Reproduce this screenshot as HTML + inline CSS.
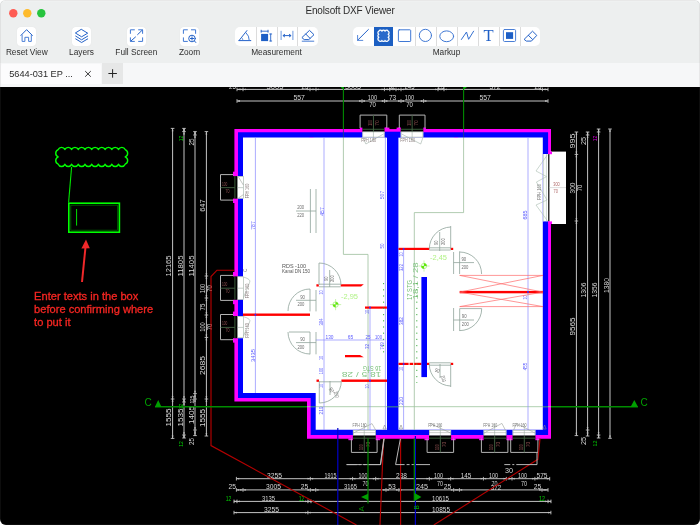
<!DOCTYPE html>
<html>
<head>
<meta charset="utf-8">
<title>Enolsoft DXF Viewer</title>
<style>
html,body{margin:0;padding:0;}
body{width:700px;height:525px;overflow:hidden;background:#fff;font-family:"Liberation Sans",Arial,sans-serif;}
#win{position:absolute;left:0;top:0;width:700px;height:525px;border-radius:5.5px 5.5px 6px 6px;overflow:hidden;background:#eceeee;}
#bar{position:absolute;left:0;top:0;width:700px;height:63px;background:#edefef;box-shadow:inset 0 1.2px 0 #f6f6f6;}
#title{position:absolute;left:0;top:4px;width:700px;text-align:center;font-size:10px;letter-spacing:-0.15px;color:#2c2c2c;line-height:14px;}
.tl{position:absolute;top:9.1px;width:8.4px;height:8.4px;border-radius:50%;}
.btn{position:absolute;top:26.8px;width:19.3px;height:19.3px;background:#fff;border-radius:3.5px;box-shadow:0 0 0.8px rgba(0,0,0,0.12);}
.lbl{position:absolute;top:46.9px;font-size:8.3px;color:#2e2e2e;line-height:10px;white-space:nowrap;text-align:center;transform:translateX(-50%);}
.grp{position:absolute;top:26.8px;height:19.3px;background:#fff;border-radius:5px;overflow:hidden;}
.cell{position:absolute;top:0;height:19.3px;border-left:0.6px solid #dcdcdc;box-sizing:border-box;}
#tabs{position:absolute;left:0;top:62.8px;width:700px;height:23.8px;background:#f6f7f8;z-index:2;}
#tab{position:absolute;left:1px;top:1px;width:100px;height:20px;background:#fcfcfd;border-radius:1.5px;}
#tabtxt{position:absolute;left:8.2px;top:4.8px;font-size:9.2px;line-height:11px;color:#2a2a2a;white-space:nowrap;}
#plus{position:absolute;left:102.1px;top:0.3px;width:20.7px;height:20.4px;background:#e6e7e7;}
#cv{position:absolute;left:0;top:86px;width:700px;height:439px;background:#000;}
svg{display:block;}
#bar,#tabs,#cv{will-change:transform;}
svg.ic{position:absolute;left:0;top:0;}
</style>
</head>
<body>
<div id="win">
<div id="bar">
  <div id="title">Enolsoft DXF Viewer</div>

  <div class="btn" style="left:17px;"></div>
  <div class="lbl" style="left:26.8px;">Reset View</div>
  <div class="btn" style="left:72px;"></div>
  <div class="lbl" style="left:81.5px;">Layers</div>
  <div class="btn" style="left:127px;"></div>
  <div class="lbl" style="left:136.3px;">Full Screen</div>
  <div class="btn" style="left:180px;"></div>
  <div class="lbl" style="left:189.5px;">Zoom</div>

  <div class="grp" style="left:235px;width:83px;">
    <div class="cell" style="left:20.75px;width:20.75px;"></div>
    <div class="cell" style="left:41.5px;width:20.75px;"></div>
    <div class="cell" style="left:62.25px;width:20.75px;"></div>
  </div>
  <div class="lbl" style="left:276.5px;">Measurement</div>

  <div class="grp" style="left:353px;width:187.3px;">
    <div class="cell" style="left:20.8px;width:19.5px;background:#1c5fc2;border-left:none;"></div>
    <div class="cell" style="left:41.6px;width:20.8px;border-left:none;"></div>
    <div class="cell" style="left:62.4px;width:20.8px;"></div>
    <div class="cell" style="left:83.2px;width:20.8px;"></div>
    <div class="cell" style="left:104px;width:20.8px;"></div>
    <div class="cell" style="left:124.9px;width:20.8px;"></div>
    <div class="cell" style="left:145.7px;width:20.8px;"></div>
    <div class="cell" style="left:166.5px;width:20.8px;"></div>
  </div>
  <div class="lbl" style="left:446.5px;">Markup</div>
  <svg class="ic" width="700" height="63" viewBox="0 0 700 63" fill="none" stroke="#2462c8" stroke-width="1" stroke-linecap="round" stroke-linejoin="round">
  <circle cx="13.3" cy="13.2" r="4.2" fill="#fe5c54" stroke="none"/><circle cx="27.3" cy="13.2" r="4.2" fill="#febb2c" stroke="none"/><circle cx="41.3" cy="13.2" r="4.2" fill="#27c43e" stroke="none"/>
  <!-- home -->
  <path d="M20.9 35.4 L26.6 29.7 L32.4 35.4"/>
  <path d="M22.1 35 V41.4 H24.9 V37.3 H28.6 V41.4 H31.3 V35" stroke="#4a7fd6"/>
  <!-- layers -->
  <path d="M81.6 29.5 L87.7 33.2 L81.6 36.8 L75.7 33.2 Z"/>
  <path d="M75.7 36.1 L81.6 39.8 L87.7 36.1"/>
  <path d="M75.7 38.9 L81.6 42.5 L87.7 38.9"/>
  <!-- full screen -->
  <path d="M130.4 33.4 V29.8 H134.4 M138.6 29.8 H142.6 V33.4 M130.4 37.8 V41.4 H134.4 M138.6 41.4 H142.6 V37.8" stroke="#3f78d4"/>
  <path d="M137.6 34.6 L142.2 30.2 M135.5 37 L130.9 41"/>
  <!-- zoom -->
  <path d="M183.4 33.4 V29.8 H187.4 M191.4 29.8 H195.6 V33.4 M183.4 37.8 V41.4 H187.4" stroke="#3f78d4"/>
  <circle cx="192" cy="38.5" r="3.3"/>
  <path d="M190.3 38.5 H193.7 M192 36.8 V40.2 M194.5 41 L195.8 42.5"/>
  <!-- angle -->
  <path d="M239 40.6 H250.8 M239 40.6 L246.9 30.6"/>
  <path d="M245.9 32.6 A10.5 10.5 0 0 1 249.3 40.4" stroke="#3f78d4"/>
  <path d="M241.6 37.4 A4.2 4.2 0 0 1 243 40.4" stroke="#3f78d4" stroke-width="0.8"/>
  <!-- area -->
  <rect x="261.1" y="33.9" width="7" height="7.2" fill="#1d5fc6" stroke="none"/>
  <path d="M261.2 31.2 H268 M261.2 30.2 V32.3 M268 30.2 V32.3 M270.7 34 V41 M269.7 34 H271.7 M269.7 41 H271.7" stroke-width="0.9"/>
  <!-- distance -->
  <path d="M281.1 31.2 V39.6 M292.9 31.2 V39.6" stroke="#6b97de"/>
  <path d="M283.2 35.6 H290.8"/>
  <path d="M284.6 34.4 L283 35.6 L284.6 36.8 M289.4 34.4 L291 35.6 L289.4 36.8"/>
  <!-- eraser (measurement) -->
  <path d="M302.2 37.3 L309.5 30.4 L314 34.7 L308.8 39.6 H304.6 Z M305.7 34 L310 38.3"/>
  <path d="M302.2 41.2 H313.8" stroke="#4a7fd6"/>
  <!-- arrow -->
  <path d="M368.4 29.5 L357.6 40.3"/>
  <path d="M357.6 35.4 V40.4 H362.8" stroke="#5a8bda"/>
  <!-- cloud (selected) -->
  <path d="M378.8 31.2 a1.75 1.75 0 0 1 3.13 0 a1.75 1.75 0 0 1 3.13 0 a1.75 1.75 0 0 1 3.13 0 a1.75 1.75 0 0 1 0 3.07 a1.75 1.75 0 0 1 0 3.07 a1.75 1.75 0 0 1 0 3.07 a1.75 1.75 0 0 1 -3.13 0 a1.75 1.75 0 0 1 -3.13 0 a1.75 1.75 0 0 1 -3.13 0 a1.75 1.75 0 0 1 0 -3.07 a1.75 1.75 0 0 1 0 -3.07 a1.75 1.75 0 0 1 0 -3.07 Z" stroke="#fff" stroke-width="1.25" fill="#2a6acb"/>
  <!-- rect -->
  <rect x="398.4" y="29.8" width="12.3" height="11.7" rx="0.8" stroke="#3f78d4"/>
  <!-- circle -->
  <circle cx="425.4" cy="35.4" r="6.1" stroke="#3f78d4"/>
  <!-- ellipse -->
  <ellipse cx="446.7" cy="36.3" rx="6.9" ry="5.4" stroke="#3f78d4"/>
  <!-- polyline -->
  <path d="M461.4 39.5 L466.5 32 L468.6 39.3 L473.6 31.2" stroke="#3570d0"/>
  <!-- filled square -->
  <rect x="503.4" y="29.5" width="12.2" height="12" rx="1.2" stroke="#4a7fd6"/>
  <rect x="506" y="32.2" width="7.1" height="6.7" fill="#1d5fc6" stroke="none"/>
  <!-- eraser (markup) -->
  <path d="M524.4 39.1 L532.5 31.2 L536.8 35.4 L531.4 41.1 H526.8 Z M528.4 35.3 L532.5 39.4"/>
  <!-- T -->
  <text x="488.5" y="40.9" font-family="Liberation Serif, Times New Roman, serif" font-size="16.5" fill="#1f5fc6" stroke="none" text-anchor="middle">T</text>
</svg>

</div>
<div id="tabs">
  <div id="tab"><div id="tabtxt">5644-031 EP ...</div></div>
  <div id="plus"></div>
  <svg class="ic" width="140" height="23" viewBox="0 62.8 140 23" fill="none" stroke="#222" stroke-width="0.9">
  <path d="M85.2 70.9 L90.8 76.5 M90.8 70.9 L85.2 76.5"/>
  <path d="M108.4 73.3 H116.9 M112.6 69 V77.5" stroke-width="1"/>
</svg>

</div>
<div id="cv">
<svg width="700" height="439" viewBox="0 86 700 439" font-family="Liberation Sans, Arial, sans-serif">
<path d="M234.4 128.9 L551 128.9 L551 438.7 L307 438.7 L307 401.4 L234.4 401.4 Z" fill="#ff00ff" stroke="none" stroke-width="1" />
<path d="M238 132.2 L548.1 132.2 L548.1 435.1 L310.7 435.1 L310.7 398 L238 398 Z" fill="#0000ff" stroke="none" stroke-width="1" />
<path d="M243 137.4 L542.8 137.4 L542.8 429.8 L315.7 429.8 L315.7 393 L243 393 Z" fill="#fff" stroke="none" stroke-width="1" />
<rect x="309.5" y="137" width="4" height="0.9" fill="#b050ff" />
<rect x="454" y="137" width="4" height="0.9" fill="#b050ff" />
<rect x="387" y="132.6" width="11.4" height="300" fill="#0000ff" />
<rect x="232.8" y="176.1" width="5.4" height="22.5" fill="#000" />
<rect x="237.6" y="176.1" width="5.6" height="22.5" fill="#fff" />
<rect x="233" y="171.7" width="2" height="4.4" fill="#ff00ff" />
<rect x="233" y="198.6" width="2" height="4.4" fill="#ff00ff" />
<line x1="234.9" y1="176.1" x2="234.9" y2="198.6" stroke="#355535" stroke-width="1.1" />
<rect x="237.6" y="176.5" width="5.7" height="21.7" fill="none" stroke="#9fb0a6" stroke-width="0.6"/>
<path d="M238.5 177.1 L243.4 185.1" fill="none" stroke="#9aa09a" stroke-width="0.6" />
<path d="M243.4 194.6 L238.5 198.0" fill="none" stroke="#9aa09a" stroke-width="0.6" />
<rect x="232.8" y="276.4" width="5.4" height="23.400000000000034" fill="#000" />
<rect x="237.6" y="276.4" width="5.6" height="23.400000000000034" fill="#fff" />
<rect x="233" y="272.0" width="2" height="4.4" fill="#ff00ff" />
<rect x="233" y="299.8" width="2" height="4.4" fill="#ff00ff" />
<line x1="234.9" y1="276.4" x2="234.9" y2="299.8" stroke="#355535" stroke-width="1.1" />
<rect x="237.6" y="276.79999999999995" width="5.7" height="22.600000000000033" fill="none" stroke="#9fb0a6" stroke-width="0.6"/>
<path d="M243.4 277.0 Q251.5 279.4 249.6 282.4 L243.4 297.8" fill="none" stroke="#9fb0a6" stroke-width="0.6"/>
<rect x="232.8" y="316" width="5.4" height="22.19999999999999" fill="#000" />
<rect x="237.6" y="316" width="5.6" height="22.19999999999999" fill="#fff" />
<rect x="233" y="311.6" width="2" height="4.4" fill="#ff00ff" />
<rect x="233" y="338.2" width="2" height="4.4" fill="#ff00ff" />
<line x1="234.9" y1="316" x2="234.9" y2="338.2" stroke="#355535" stroke-width="1.1" />
<rect x="237.6" y="316.4" width="5.7" height="21.399999999999988" fill="none" stroke="#9fb0a6" stroke-width="0.6"/>
<path d="M243.4 316.6 Q251.5 319 249.6 322 L243.4 336.2" fill="none" stroke="#9fb0a6" stroke-width="0.6"/>
<rect x="384.5" y="127.6" width="16.2" height="5" fill="#ff00ff" />
<rect x="389.4" y="127" width="7.2" height="2.1" fill="#000" />
<rect x="385" y="131.7" width="15.7" height="5.6" fill="#0000ff" />
<rect x="362.4" y="126.8" width="22.100000000000023" height="5.2" fill="#000" />
<rect x="362.4" y="131.7" width="22.100000000000023" height="5.9" fill="#fff" />
<rect x="359.79999999999995" y="127.6" width="2.6" height="2" fill="#ff00ff" />
<rect x="384.5" y="127.6" width="2.6" height="2" fill="#ff00ff" />
<line x1="362.4" y1="129.3" x2="384.5" y2="129.3" stroke="#355535" stroke-width="1.1" />
<rect x="362.79999999999995" y="131.9" width="21.300000000000022" height="5.2" fill="none" stroke="#9fb0a6" stroke-width="0.6"/>
<path d="M383.5 134 L365.9 144 L363.0 137.6" fill="none" stroke="#9fb0a6" stroke-width="0.6" />
<rect x="400.7" y="126.8" width="22.600000000000023" height="5.2" fill="#000" />
<rect x="400.7" y="131.7" width="22.600000000000023" height="5.9" fill="#fff" />
<rect x="398.09999999999997" y="127.6" width="2.6" height="2" fill="#ff00ff" />
<rect x="423.3" y="127.6" width="2.6" height="2" fill="#ff00ff" />
<line x1="400.7" y1="129.3" x2="423.3" y2="129.3" stroke="#355535" stroke-width="1.1" />
<rect x="401.09999999999997" y="131.9" width="21.800000000000022" height="5.2" fill="none" stroke="#9fb0a6" stroke-width="0.6"/>
<path d="M401.7 134 L420.7 144 L422.90000000000003 137.6" fill="none" stroke="#9fb0a6" stroke-width="0.6" />
<rect x="543" y="154" width="9" height="67.4" fill="#fff" />
<rect x="550" y="151.6" width="16" height="72.4" fill="#fff" />
<rect x="548.2" y="154" width="1.2" height="67.4" fill="#000" />
<rect x="548" y="151.6" width="4" height="2.6" fill="#ff00ff" />
<rect x="548" y="221.4" width="4" height="2.6" fill="#ff00ff" />
<rect x="352.9" y="430" width="22.80000000000001" height="5.4" fill="#fff" />
<rect x="352.9" y="435.2" width="22.80000000000001" height="5" fill="#000" />
<rect x="348.4" y="438.4" width="4.5" height="1.8" fill="#ff00ff" />
<rect x="375.7" y="438.4" width="4.5" height="1.8" fill="#ff00ff" />
<rect x="353.29999999999995" y="430.4" width="22.00000000000001" height="4.9" fill="none" stroke="#9fb0a6" stroke-width="0.6"/>
<line x1="352.9" y1="438.2" x2="375.7" y2="438.2" stroke="#355535" stroke-width="1.1" />
<rect x="429" y="430" width="22.100000000000023" height="5.4" fill="#fff" />
<rect x="429" y="435.2" width="22.100000000000023" height="5" fill="#000" />
<rect x="424.5" y="438.4" width="4.5" height="1.8" fill="#ff00ff" />
<rect x="451.1" y="438.4" width="4.5" height="1.8" fill="#ff00ff" />
<rect x="429.4" y="430.4" width="21.300000000000022" height="4.9" fill="none" stroke="#9fb0a6" stroke-width="0.6"/>
<line x1="429" y1="438.2" x2="451.1" y2="438.2" stroke="#355535" stroke-width="1.1" />
<rect x="483.6" y="430" width="22.799999999999955" height="5.4" fill="#fff" />
<rect x="483.6" y="435.2" width="22.799999999999955" height="5" fill="#000" />
<rect x="479.1" y="438.4" width="4.5" height="1.8" fill="#ff00ff" />
<rect x="506.4" y="438.4" width="4.5" height="1.8" fill="#ff00ff" />
<rect x="484.0" y="430.4" width="21.999999999999954" height="4.9" fill="none" stroke="#9fb0a6" stroke-width="0.6"/>
<line x1="483.6" y1="438.2" x2="506.4" y2="438.2" stroke="#355535" stroke-width="1.1" />
<rect x="512.6" y="430" width="22.799999999999955" height="5.4" fill="#fff" />
<rect x="512.6" y="435.2" width="22.799999999999955" height="5" fill="#000" />
<rect x="508.1" y="438.4" width="4.5" height="1.8" fill="#ff00ff" />
<rect x="535.4" y="438.4" width="4.5" height="1.8" fill="#ff00ff" />
<rect x="513.0" y="430.4" width="21.999999999999954" height="4.9" fill="none" stroke="#9fb0a6" stroke-width="0.6"/>
<line x1="512.6" y1="438.2" x2="535.4" y2="438.2" stroke="#355535" stroke-width="1.1" />
<path d="M233.4 174.6 L220.5 174.6 L220.5 200.1 L233.4 200.1" fill="none" stroke="#b4b4b4" stroke-width="1" />
<line x1="220.5" y1="187.65" x2="234.8" y2="187.65" stroke="#466646" stroke-width="0.9" />
<line x1="237.6" y1="187.65" x2="243.2" y2="187.65" stroke="#9fb0a6" stroke-width="0.6" />
<text x="222" y="185.55" font-size="5" fill="#8e5050" text-anchor="start" textLength="5.4" lengthAdjust="spacingAndGlyphs" >100</text>
<text x="225.4" y="192.55" font-size="5" fill="#8e5050" text-anchor="start" textLength="4" lengthAdjust="spacingAndGlyphs" >70</text>
<path d="M233.4 275.4 L220.5 275.4 L220.5 300.4 L233.4 300.4" fill="none" stroke="#b4b4b4" stroke-width="1" />
<line x1="220.5" y1="288.2" x2="234.8" y2="288.2" stroke="#466646" stroke-width="0.9" />
<line x1="237.6" y1="288.2" x2="243.2" y2="288.2" stroke="#9fb0a6" stroke-width="0.6" />
<text x="222" y="286.09999999999997" font-size="5" fill="#8e5050" text-anchor="start" textLength="5.4" lengthAdjust="spacingAndGlyphs" >100</text>
<text x="225.4" y="293.09999999999997" font-size="5" fill="#8e5050" text-anchor="start" textLength="4" lengthAdjust="spacingAndGlyphs" >70</text>
<path d="M233.4 314.5 L220.5 314.5 L220.5 339.7 L233.4 339.7" fill="none" stroke="#b4b4b4" stroke-width="1" />
<line x1="220.5" y1="327.40000000000003" x2="234.8" y2="327.40000000000003" stroke="#466646" stroke-width="0.9" />
<line x1="237.6" y1="327.40000000000003" x2="243.2" y2="327.40000000000003" stroke="#9fb0a6" stroke-width="0.6" />
<text x="222" y="325.3" font-size="5" fill="#8e5050" text-anchor="start" textLength="5.4" lengthAdjust="spacingAndGlyphs" >100</text>
<text x="225.4" y="332.3" font-size="5" fill="#8e5050" text-anchor="start" textLength="4" lengthAdjust="spacingAndGlyphs" >70</text>
<path d="M360.1 128 L360.1 115.1 L386.8 115.1 L386.8 128" fill="none" stroke="#b4b4b4" stroke-width="1" />
<line x1="373.45000000000005" y1="115.1" x2="373.45000000000005" y2="131.6" stroke="#466646" stroke-width="0.9" />
<line x1="373.45000000000005" y1="131.6" x2="373.45000000000005" y2="140" stroke="#9fb0a6" stroke-width="0.6" />
<text x="371.95000000000005" y="125.8" font-size="5" fill="#8e5050" text-anchor="start" textLength="5.6" lengthAdjust="spacingAndGlyphs" transform="rotate(-90 371.95000000000005 125.8)" >100</text>
<text x="379.45000000000005" y="125.8" font-size="5" fill="#8e5050" text-anchor="start" textLength="5.6" lengthAdjust="spacingAndGlyphs" transform="rotate(-90 379.45000000000005 125.8)" >70</text>
<path d="M399.3 128 L399.3 115.1 L425 115.1 L425 128" fill="none" stroke="#b4b4b4" stroke-width="1" />
<line x1="412.15" y1="115.1" x2="412.15" y2="131.6" stroke="#466646" stroke-width="0.9" />
<line x1="412.15" y1="131.6" x2="412.15" y2="140" stroke="#9fb0a6" stroke-width="0.6" />
<text x="410.65" y="125.8" font-size="5" fill="#8e5050" text-anchor="start" textLength="5.6" lengthAdjust="spacingAndGlyphs" transform="rotate(-90 410.65 125.8)" >100</text>
<text x="418.15" y="125.8" font-size="5" fill="#8e5050" text-anchor="start" textLength="5.6" lengthAdjust="spacingAndGlyphs" transform="rotate(-90 418.15 125.8)" >70</text>
<path d="M351.4 438.6 L351.4 452.4 L377.1 452.4 L377.1 438.6" fill="none" stroke="#b4b4b4" stroke-width="1" />
<line x1="364.25" y1="435.4" x2="364.25" y2="452.4" stroke="#466646" stroke-width="0.9" />
<line x1="364.25" y1="424" x2="364.25" y2="435.4" stroke="#9fb0a6" stroke-width="0.6" />
<text x="362.65" y="450" font-size="5" fill="#8e5050" text-anchor="start" textLength="5.6" lengthAdjust="spacingAndGlyphs" transform="rotate(-90 362.65 450)" >100</text>
<text x="369.85" y="447" font-size="5" fill="#8e5050" text-anchor="start" textLength="5.2" lengthAdjust="spacingAndGlyphs" transform="rotate(-90 369.85 447)" >70</text>
<path d="M427.1 438.6 L427.1 452.4 L453.6 452.4 L453.6 438.6" fill="none" stroke="#b4b4b4" stroke-width="1" />
<line x1="440.35" y1="435.4" x2="440.35" y2="452.4" stroke="#466646" stroke-width="0.9" />
<line x1="440.35" y1="424" x2="440.35" y2="435.4" stroke="#9fb0a6" stroke-width="0.6" />
<text x="438.75" y="450" font-size="5" fill="#8e5050" text-anchor="start" textLength="5.6" lengthAdjust="spacingAndGlyphs" transform="rotate(-90 438.75 450)" >100</text>
<text x="445.95000000000005" y="447" font-size="5" fill="#8e5050" text-anchor="start" textLength="5.2" lengthAdjust="spacingAndGlyphs" transform="rotate(-90 445.95000000000005 447)" >70</text>
<path d="M481.4 438.6 L481.4 452.4 L507.9 452.4 L507.9 438.6" fill="none" stroke="#b4b4b4" stroke-width="1" />
<line x1="494.65" y1="435.4" x2="494.65" y2="452.4" stroke="#466646" stroke-width="0.9" />
<line x1="494.65" y1="424" x2="494.65" y2="435.4" stroke="#9fb0a6" stroke-width="0.6" />
<text x="493.04999999999995" y="450" font-size="5" fill="#8e5050" text-anchor="start" textLength="5.6" lengthAdjust="spacingAndGlyphs" transform="rotate(-90 493.04999999999995 450)" >100</text>
<text x="500.25" y="447" font-size="5" fill="#8e5050" text-anchor="start" textLength="5.2" lengthAdjust="spacingAndGlyphs" transform="rotate(-90 500.25 447)" >70</text>
<path d="M510.7 438.6 L510.7 452.4 L537.9 452.4 L537.9 438.6" fill="none" stroke="#b4b4b4" stroke-width="1" />
<line x1="524.3" y1="435.4" x2="524.3" y2="452.4" stroke="#466646" stroke-width="0.9" />
<line x1="524.3" y1="424" x2="524.3" y2="435.4" stroke="#9fb0a6" stroke-width="0.6" />
<text x="522.6999999999999" y="450" font-size="5" fill="#8e5050" text-anchor="start" textLength="5.6" lengthAdjust="spacingAndGlyphs" transform="rotate(-90 522.6999999999999 450)" >100</text>
<text x="529.9" y="447" font-size="5" fill="#8e5050" text-anchor="start" textLength="5.2" lengthAdjust="spacingAndGlyphs" transform="rotate(-90 529.9 447)" >70</text>
<line x1="172.6" y1="128.4" x2="172.6" y2="438.4" stroke="#c4c4c4" stroke-width="1" />
<line x1="184" y1="128.4" x2="184" y2="438" stroke="#c4c4c4" stroke-width="1" />
<line x1="195" y1="131.6" x2="195" y2="435.6" stroke="#c4c4c4" stroke-width="1" />
<line x1="206.4" y1="131.6" x2="206.4" y2="436" stroke="#c4c4c4" stroke-width="1" />
<line x1="170.79999999999998" y1="128.4" x2="174.4" y2="128.4" stroke="#c4c4c4" stroke-width="0.9" />
<path d="M172.6 128.4 L171.7 131.20000000000002 L173.5 131.20000000000002 Z" fill="#c4c4c4" stroke="none" stroke-width="1" />
<line x1="170.79999999999998" y1="399" x2="174.4" y2="399" stroke="#c4c4c4" stroke-width="0.9" />
<path d="M172.6 399 L171.7 396.2 L173.5 396.2 Z" fill="#c4c4c4" stroke="none" stroke-width="1" />
<path d="M172.6 399 L171.7 401.8 L173.5 401.8 Z" fill="#c4c4c4" stroke="none" stroke-width="1" />
<line x1="170.79999999999998" y1="438.4" x2="174.4" y2="438.4" stroke="#c4c4c4" stroke-width="0.9" />
<path d="M172.6 438.4 L171.7 435.59999999999997 L173.5 435.59999999999997 Z" fill="#c4c4c4" stroke="none" stroke-width="1" />
<line x1="182.2" y1="128.4" x2="185.8" y2="128.4" stroke="#c4c4c4" stroke-width="0.9" />
<path d="M184 128.4 L183.1 131.20000000000002 L184.9 131.20000000000002 Z" fill="#c4c4c4" stroke="none" stroke-width="1" />
<line x1="182.2" y1="131.6" x2="185.8" y2="131.6" stroke="#c4c4c4" stroke-width="0.9" />
<path d="M184 131.6 L183.1 128.79999999999998 L184.9 128.79999999999998 Z" fill="#c4c4c4" stroke="none" stroke-width="1" />
<path d="M184 131.6 L183.1 134.4 L184.9 134.4 Z" fill="#c4c4c4" stroke="none" stroke-width="1" />
<line x1="182.2" y1="399" x2="185.8" y2="399" stroke="#c4c4c4" stroke-width="0.9" />
<path d="M184 399 L183.1 396.2 L184.9 396.2 Z" fill="#c4c4c4" stroke="none" stroke-width="1" />
<path d="M184 399 L183.1 401.8 L184.9 401.8 Z" fill="#c4c4c4" stroke="none" stroke-width="1" />
<line x1="182.2" y1="402" x2="185.8" y2="402" stroke="#c4c4c4" stroke-width="0.9" />
<path d="M184 402 L183.1 399.2 L184.9 399.2 Z" fill="#c4c4c4" stroke="none" stroke-width="1" />
<path d="M184 402 L183.1 404.8 L184.9 404.8 Z" fill="#c4c4c4" stroke="none" stroke-width="1" />
<line x1="182.2" y1="435" x2="185.8" y2="435" stroke="#c4c4c4" stroke-width="0.9" />
<path d="M184 435 L183.1 432.2 L184.9 432.2 Z" fill="#c4c4c4" stroke="none" stroke-width="1" />
<path d="M184 435 L183.1 437.8 L184.9 437.8 Z" fill="#c4c4c4" stroke="none" stroke-width="1" />
<line x1="182.2" y1="438" x2="185.8" y2="438" stroke="#c4c4c4" stroke-width="0.9" />
<path d="M184 438 L183.1 435.2 L184.9 435.2 Z" fill="#c4c4c4" stroke="none" stroke-width="1" />
<line x1="193.2" y1="131.6" x2="196.8" y2="131.6" stroke="#c4c4c4" stroke-width="0.9" />
<path d="M195 131.6 L194.1 134.4 L195.9 134.4 Z" fill="#c4c4c4" stroke="none" stroke-width="1" />
<line x1="193.2" y1="135" x2="196.8" y2="135" stroke="#c4c4c4" stroke-width="0.9" />
<path d="M195 135 L194.1 132.2 L195.9 132.2 Z" fill="#c4c4c4" stroke="none" stroke-width="1" />
<path d="M195 135 L194.1 137.8 L195.9 137.8 Z" fill="#c4c4c4" stroke="none" stroke-width="1" />
<line x1="193.2" y1="393.6" x2="196.8" y2="393.6" stroke="#c4c4c4" stroke-width="0.9" />
<path d="M195 393.6 L194.1 390.8 L195.9 390.8 Z" fill="#c4c4c4" stroke="none" stroke-width="1" />
<path d="M195 393.6 L194.1 396.40000000000003 L195.9 396.40000000000003 Z" fill="#c4c4c4" stroke="none" stroke-width="1" />
<line x1="193.2" y1="399" x2="196.8" y2="399" stroke="#c4c4c4" stroke-width="0.9" />
<path d="M195 399 L194.1 396.2 L195.9 396.2 Z" fill="#c4c4c4" stroke="none" stroke-width="1" />
<path d="M195 399 L194.1 401.8 L195.9 401.8 Z" fill="#c4c4c4" stroke="none" stroke-width="1" />
<line x1="193.2" y1="430" x2="196.8" y2="430" stroke="#c4c4c4" stroke-width="0.9" />
<path d="M195 430 L194.1 427.2 L195.9 427.2 Z" fill="#c4c4c4" stroke="none" stroke-width="1" />
<path d="M195 430 L194.1 432.8 L195.9 432.8 Z" fill="#c4c4c4" stroke="none" stroke-width="1" />
<line x1="193.2" y1="435.6" x2="196.8" y2="435.6" stroke="#c4c4c4" stroke-width="0.9" />
<path d="M195 435.6 L194.1 432.8 L195.9 432.8 Z" fill="#c4c4c4" stroke="none" stroke-width="1" />
<line x1="204.6" y1="131.6" x2="208.20000000000002" y2="131.6" stroke="#c4c4c4" stroke-width="0.9" />
<path d="M206.4 131.6 L205.5 134.4 L207.3 134.4 Z" fill="#c4c4c4" stroke="none" stroke-width="1" />
<line x1="204.6" y1="276" x2="208.20000000000002" y2="276" stroke="#c4c4c4" stroke-width="0.9" />
<path d="M206.4 276 L205.5 273.2 L207.3 273.2 Z" fill="#c4c4c4" stroke="none" stroke-width="1" />
<path d="M206.4 276 L205.5 278.8 L207.3 278.8 Z" fill="#c4c4c4" stroke="none" stroke-width="1" />
<line x1="204.6" y1="298" x2="208.20000000000002" y2="298" stroke="#c4c4c4" stroke-width="0.9" />
<path d="M206.4 298 L205.5 295.2 L207.3 295.2 Z" fill="#c4c4c4" stroke="none" stroke-width="1" />
<path d="M206.4 298 L205.5 300.8 L207.3 300.8 Z" fill="#c4c4c4" stroke="none" stroke-width="1" />
<line x1="204.6" y1="315" x2="208.20000000000002" y2="315" stroke="#c4c4c4" stroke-width="0.9" />
<path d="M206.4 315 L205.5 312.2 L207.3 312.2 Z" fill="#c4c4c4" stroke="none" stroke-width="1" />
<path d="M206.4 315 L205.5 317.8 L207.3 317.8 Z" fill="#c4c4c4" stroke="none" stroke-width="1" />
<line x1="204.6" y1="337.4" x2="208.20000000000002" y2="337.4" stroke="#c4c4c4" stroke-width="0.9" />
<path d="M206.4 337.4 L205.5 334.59999999999997 L207.3 334.59999999999997 Z" fill="#c4c4c4" stroke="none" stroke-width="1" />
<path d="M206.4 337.4 L205.5 340.2 L207.3 340.2 Z" fill="#c4c4c4" stroke="none" stroke-width="1" />
<line x1="204.6" y1="399" x2="208.20000000000002" y2="399" stroke="#c4c4c4" stroke-width="0.9" />
<path d="M206.4 399 L205.5 396.2 L207.3 396.2 Z" fill="#c4c4c4" stroke="none" stroke-width="1" />
<path d="M206.4 399 L205.5 401.8 L207.3 401.8 Z" fill="#c4c4c4" stroke="none" stroke-width="1" />
<line x1="204.6" y1="436" x2="208.20000000000002" y2="436" stroke="#c4c4c4" stroke-width="0.9" />
<path d="M206.4 436 L205.5 433.2 L207.3 433.2 Z" fill="#c4c4c4" stroke="none" stroke-width="1" />
<text x="171.4" y="266" font-size="7" fill="#d8d8d8" text-anchor="middle" textLength="21" lengthAdjust="spacingAndGlyphs" transform="rotate(-90 171.4 266)">12165</text>
<text x="182.8" y="266" font-size="7" fill="#d8d8d8" text-anchor="middle" textLength="21" lengthAdjust="spacingAndGlyphs" transform="rotate(-90 182.8 266)">11805</text>
<text x="193.8" y="266" font-size="7" fill="#d8d8d8" text-anchor="middle" textLength="21" lengthAdjust="spacingAndGlyphs" transform="rotate(-90 193.8 266)">11405</text>
<text x="205.2" y="205.6" font-size="7.4" fill="#d8d8d8" text-anchor="middle" textLength="12.5" lengthAdjust="spacingAndGlyphs" transform="rotate(-90 205.2 205.6)">647</text>
<text x="204.8" y="288.5" font-size="6.6" fill="#d8d8d8" text-anchor="middle" textLength="9.5" lengthAdjust="spacingAndGlyphs" transform="rotate(-90 204.8 288.5)">100</text>
<text x="211.6" y="288.5" font-size="6.6" fill="#d8d8d8" text-anchor="middle" textLength="6.5" lengthAdjust="spacingAndGlyphs" transform="rotate(-90 211.6 288.5)">70</text>
<text x="204.8" y="307" font-size="6.6" fill="#d8d8d8" text-anchor="middle" textLength="6.8" lengthAdjust="spacingAndGlyphs" transform="rotate(-90 204.8 307)">75</text>
<text x="204.8" y="327" font-size="6.6" fill="#d8d8d8" text-anchor="middle" textLength="9.5" lengthAdjust="spacingAndGlyphs" transform="rotate(-90 204.8 327)">100</text>
<text x="211.6" y="327" font-size="6.6" fill="#d8d8d8" text-anchor="middle" textLength="6.5" lengthAdjust="spacingAndGlyphs" transform="rotate(-90 211.6 327)">70</text>
<text x="205" y="365.5" font-size="7" fill="#d8d8d8" text-anchor="middle" textLength="19" lengthAdjust="spacingAndGlyphs" transform="rotate(-90 205 365.5)">2685</text>
<text x="171.4" y="417.5" font-size="7" fill="#d8d8d8" text-anchor="middle" textLength="18" lengthAdjust="spacingAndGlyphs" transform="rotate(-90 171.4 417.5)">1555</text>
<text x="182.8" y="417.5" font-size="7" fill="#d8d8d8" text-anchor="middle" textLength="18" lengthAdjust="spacingAndGlyphs" transform="rotate(-90 182.8 417.5)">1535</text>
<text x="193.8" y="415" font-size="7" fill="#d8d8d8" text-anchor="middle" textLength="18" lengthAdjust="spacingAndGlyphs" transform="rotate(-90 193.8 415)">1405</text>
<text x="205.2" y="418" font-size="7" fill="#d8d8d8" text-anchor="middle" textLength="18" lengthAdjust="spacingAndGlyphs" transform="rotate(-90 205.2 418)">1555</text>
<text x="193.8" y="399.6" font-size="6" fill="#d8d8d8" text-anchor="middle" textLength="8" lengthAdjust="spacingAndGlyphs" transform="rotate(-90 193.8 399.6)">125</text>
<text x="182.6" y="406.5" font-size="6" fill="#00d000" text-anchor="middle" textLength="5.5" lengthAdjust="spacingAndGlyphs" transform="rotate(-90 182.6 406.5)">12</text>
<text x="182.6" y="138.4" font-size="6" fill="#00d000" text-anchor="middle" textLength="5.5" lengthAdjust="spacingAndGlyphs" transform="rotate(-90 182.6 138.4)">12</text>
<text x="193.8" y="142" font-size="6.6" fill="#d8d8d8" text-anchor="middle" textLength="7" lengthAdjust="spacingAndGlyphs" transform="rotate(-90 193.8 142)">25</text>
<text x="182.6" y="444" font-size="6" fill="#00d000" text-anchor="middle" textLength="5.5" lengthAdjust="spacingAndGlyphs" transform="rotate(-90 182.6 444)">12</text>
<text x="193.8" y="441.6" font-size="6.6" fill="#d8d8d8" text-anchor="middle" textLength="7" lengthAdjust="spacingAndGlyphs" transform="rotate(-90 193.8 441.6)">25</text>
<line x1="576.4" y1="132" x2="576.4" y2="435.6" stroke="#c4c4c4" stroke-width="1" />
<line x1="587.6" y1="132" x2="587.6" y2="436" stroke="#c4c4c4" stroke-width="1" />
<line x1="598.6" y1="129" x2="598.6" y2="438" stroke="#c4c4c4" stroke-width="1" />
<line x1="610" y1="129" x2="610" y2="438.3" stroke="#c4c4c4" stroke-width="1" />
<line x1="574.6" y1="132" x2="578.1999999999999" y2="132" stroke="#c4c4c4" stroke-width="0.9" />
<path d="M576.4 132 L575.5 134.8 L577.3 134.8 Z" fill="#c4c4c4" stroke="none" stroke-width="1" />
<line x1="574.6" y1="154.4" x2="578.1999999999999" y2="154.4" stroke="#c4c4c4" stroke-width="0.9" />
<path d="M576.4 154.4 L575.5 151.6 L577.3 151.6 Z" fill="#c4c4c4" stroke="none" stroke-width="1" />
<path d="M576.4 154.4 L575.5 157.20000000000002 L577.3 157.20000000000002 Z" fill="#c4c4c4" stroke="none" stroke-width="1" />
<line x1="574.6" y1="221" x2="578.1999999999999" y2="221" stroke="#c4c4c4" stroke-width="0.9" />
<path d="M576.4 221 L575.5 218.2 L577.3 218.2 Z" fill="#c4c4c4" stroke="none" stroke-width="1" />
<path d="M576.4 221 L575.5 223.8 L577.3 223.8 Z" fill="#c4c4c4" stroke="none" stroke-width="1" />
<line x1="574.6" y1="435.6" x2="578.1999999999999" y2="435.6" stroke="#c4c4c4" stroke-width="0.9" />
<path d="M576.4 435.6 L575.5 432.8 L577.3 432.8 Z" fill="#c4c4c4" stroke="none" stroke-width="1" />
<line x1="585.8000000000001" y1="132" x2="589.4" y2="132" stroke="#c4c4c4" stroke-width="0.9" />
<path d="M587.6 132 L586.7 134.8 L588.5 134.8 Z" fill="#c4c4c4" stroke="none" stroke-width="1" />
<line x1="585.8000000000001" y1="135" x2="589.4" y2="135" stroke="#c4c4c4" stroke-width="0.9" />
<path d="M587.6 135 L586.7 132.2 L588.5 132.2 Z" fill="#c4c4c4" stroke="none" stroke-width="1" />
<path d="M587.6 135 L586.7 137.8 L588.5 137.8 Z" fill="#c4c4c4" stroke="none" stroke-width="1" />
<line x1="585.8000000000001" y1="430" x2="589.4" y2="430" stroke="#c4c4c4" stroke-width="0.9" />
<path d="M587.6 430 L586.7 427.2 L588.5 427.2 Z" fill="#c4c4c4" stroke="none" stroke-width="1" />
<path d="M587.6 430 L586.7 432.8 L588.5 432.8 Z" fill="#c4c4c4" stroke="none" stroke-width="1" />
<line x1="585.8000000000001" y1="436" x2="589.4" y2="436" stroke="#c4c4c4" stroke-width="0.9" />
<path d="M587.6 436 L586.7 433.2 L588.5 433.2 Z" fill="#c4c4c4" stroke="none" stroke-width="1" />
<line x1="596.8000000000001" y1="129" x2="600.4" y2="129" stroke="#c4c4c4" stroke-width="0.9" />
<path d="M598.6 129 L597.7 131.8 L599.5 131.8 Z" fill="#c4c4c4" stroke="none" stroke-width="1" />
<line x1="596.8000000000001" y1="132" x2="600.4" y2="132" stroke="#c4c4c4" stroke-width="0.9" />
<path d="M598.6 132 L597.7 129.2 L599.5 129.2 Z" fill="#c4c4c4" stroke="none" stroke-width="1" />
<path d="M598.6 132 L597.7 134.8 L599.5 134.8 Z" fill="#c4c4c4" stroke="none" stroke-width="1" />
<line x1="596.8000000000001" y1="435" x2="600.4" y2="435" stroke="#c4c4c4" stroke-width="0.9" />
<path d="M598.6 435 L597.7 432.2 L599.5 432.2 Z" fill="#c4c4c4" stroke="none" stroke-width="1" />
<path d="M598.6 435 L597.7 437.8 L599.5 437.8 Z" fill="#c4c4c4" stroke="none" stroke-width="1" />
<line x1="596.8000000000001" y1="438" x2="600.4" y2="438" stroke="#c4c4c4" stroke-width="0.9" />
<path d="M598.6 438 L597.7 435.2 L599.5 435.2 Z" fill="#c4c4c4" stroke="none" stroke-width="1" />
<line x1="608.2" y1="129" x2="611.8" y2="129" stroke="#c4c4c4" stroke-width="0.9" />
<path d="M610 129 L609.1 131.8 L610.9 131.8 Z" fill="#c4c4c4" stroke="none" stroke-width="1" />
<line x1="608.2" y1="438.3" x2="611.8" y2="438.3" stroke="#c4c4c4" stroke-width="0.9" />
<path d="M610 438.3 L609.1 435.5 L610.9 435.5 Z" fill="#c4c4c4" stroke="none" stroke-width="1" />
<text x="575" y="141" font-size="7.2" fill="#d8d8d8" text-anchor="middle" textLength="15" lengthAdjust="spacingAndGlyphs" transform="rotate(-90 575 141)">995</text>
<text x="575" y="188" font-size="6.6" fill="#d8d8d8" text-anchor="middle" textLength="11" lengthAdjust="spacingAndGlyphs" transform="rotate(-90 575 188)">300</text>
<text x="581.8" y="188" font-size="6.6" fill="#d8d8d8" text-anchor="middle" textLength="6.5" lengthAdjust="spacingAndGlyphs" transform="rotate(-90 581.8 188)">70</text>
<text x="575" y="326.5" font-size="7" fill="#d8d8d8" text-anchor="middle" textLength="18" lengthAdjust="spacingAndGlyphs" transform="rotate(-90 575 326.5)">9565</text>
<text x="586.2" y="141" font-size="6.6" fill="#d8d8d8" text-anchor="middle" textLength="8" lengthAdjust="spacingAndGlyphs" transform="rotate(-90 586.2 141)">25</text>
<text x="586.4" y="290" font-size="7" fill="#d8d8d8" text-anchor="middle" textLength="15" lengthAdjust="spacingAndGlyphs" transform="rotate(-90 586.4 290)">1306</text>
<text x="597.4" y="138.5" font-size="6" fill="#e000e0" text-anchor="middle" textLength="5.5" lengthAdjust="spacingAndGlyphs" transform="rotate(-90 597.4 138.5)">12</text>
<text x="597.4" y="290" font-size="7" fill="#d8d8d8" text-anchor="middle" textLength="15" lengthAdjust="spacingAndGlyphs" transform="rotate(-90 597.4 290)">1356</text>
<text x="608.8" y="285.5" font-size="7" fill="#d8d8d8" text-anchor="middle" textLength="15" lengthAdjust="spacingAndGlyphs" transform="rotate(-90 608.8 285.5)">1380</text>
<text x="586.2" y="441" font-size="6.6" fill="#d8d8d8" text-anchor="middle" textLength="8" lengthAdjust="spacingAndGlyphs" transform="rotate(-90 586.2 441)">25</text>
<text x="597.4" y="443.5" font-size="6" fill="#00d000" text-anchor="middle" textLength="6" lengthAdjust="spacingAndGlyphs" transform="rotate(-90 597.4 443.5)">12</text>
<line x1="237" y1="89.4" x2="548" y2="89.4" stroke="#c4c4c4" stroke-width="1" />
<line x1="237" y1="101" x2="548" y2="101" stroke="#c4c4c4" stroke-width="1" />
<line x1="237" y1="87.60000000000001" x2="237" y2="91.2" stroke="#c4c4c4" stroke-width="0.9" />
<path d="M237 89.4 L239.8 88.5 L239.8 90.30000000000001 Z" fill="#c4c4c4" stroke="none" stroke-width="1" />
<line x1="243" y1="87.60000000000001" x2="243" y2="91.2" stroke="#c4c4c4" stroke-width="0.9" />
<path d="M243 89.4 L240.2 88.5 L240.2 90.30000000000001 Z" fill="#c4c4c4" stroke="none" stroke-width="1" />
<path d="M243 89.4 L245.8 88.5 L245.8 90.30000000000001 Z" fill="#c4c4c4" stroke="none" stroke-width="1" />
<line x1="310" y1="87.60000000000001" x2="310" y2="91.2" stroke="#c4c4c4" stroke-width="0.9" />
<path d="M310 89.4 L307.2 88.5 L307.2 90.30000000000001 Z" fill="#c4c4c4" stroke="none" stroke-width="1" />
<path d="M310 89.4 L312.8 88.5 L312.8 90.30000000000001 Z" fill="#c4c4c4" stroke="none" stroke-width="1" />
<line x1="316" y1="87.60000000000001" x2="316" y2="91.2" stroke="#c4c4c4" stroke-width="0.9" />
<path d="M316 89.4 L313.2 88.5 L313.2 90.30000000000001 Z" fill="#c4c4c4" stroke="none" stroke-width="1" />
<path d="M316 89.4 L318.8 88.5 L318.8 90.30000000000001 Z" fill="#c4c4c4" stroke="none" stroke-width="1" />
<line x1="384.4" y1="87.60000000000001" x2="384.4" y2="91.2" stroke="#c4c4c4" stroke-width="0.9" />
<path d="M384.4 89.4 L381.59999999999997 88.5 L381.59999999999997 90.30000000000001 Z" fill="#c4c4c4" stroke="none" stroke-width="1" />
<path d="M384.4 89.4 L387.2 88.5 L387.2 90.30000000000001 Z" fill="#c4c4c4" stroke="none" stroke-width="1" />
<line x1="389.8" y1="87.60000000000001" x2="389.8" y2="91.2" stroke="#c4c4c4" stroke-width="0.9" />
<path d="M389.8 89.4 L387.0 88.5 L387.0 90.30000000000001 Z" fill="#c4c4c4" stroke="none" stroke-width="1" />
<path d="M389.8 89.4 L392.6 88.5 L392.6 90.30000000000001 Z" fill="#c4c4c4" stroke="none" stroke-width="1" />
<line x1="396" y1="87.60000000000001" x2="396" y2="91.2" stroke="#c4c4c4" stroke-width="0.9" />
<path d="M396 89.4 L393.2 88.5 L393.2 90.30000000000001 Z" fill="#c4c4c4" stroke="none" stroke-width="1" />
<path d="M396 89.4 L398.8 88.5 L398.8 90.30000000000001 Z" fill="#c4c4c4" stroke="none" stroke-width="1" />
<line x1="401" y1="87.60000000000001" x2="401" y2="91.2" stroke="#c4c4c4" stroke-width="0.9" />
<path d="M401 89.4 L398.2 88.5 L398.2 90.30000000000001 Z" fill="#c4c4c4" stroke="none" stroke-width="1" />
<path d="M401 89.4 L403.8 88.5 L403.8 90.30000000000001 Z" fill="#c4c4c4" stroke="none" stroke-width="1" />
<line x1="438" y1="87.60000000000001" x2="438" y2="91.2" stroke="#c4c4c4" stroke-width="0.9" />
<path d="M438 89.4 L435.2 88.5 L435.2 90.30000000000001 Z" fill="#c4c4c4" stroke="none" stroke-width="1" />
<path d="M438 89.4 L440.8 88.5 L440.8 90.30000000000001 Z" fill="#c4c4c4" stroke="none" stroke-width="1" />
<line x1="444" y1="87.60000000000001" x2="444" y2="91.2" stroke="#c4c4c4" stroke-width="0.9" />
<path d="M444 89.4 L441.2 88.5 L441.2 90.30000000000001 Z" fill="#c4c4c4" stroke="none" stroke-width="1" />
<path d="M444 89.4 L446.8 88.5 L446.8 90.30000000000001 Z" fill="#c4c4c4" stroke="none" stroke-width="1" />
<line x1="542.4" y1="87.60000000000001" x2="542.4" y2="91.2" stroke="#c4c4c4" stroke-width="0.9" />
<path d="M542.4 89.4 L539.6 88.5 L539.6 90.30000000000001 Z" fill="#c4c4c4" stroke="none" stroke-width="1" />
<path d="M542.4 89.4 L545.1999999999999 88.5 L545.1999999999999 90.30000000000001 Z" fill="#c4c4c4" stroke="none" stroke-width="1" />
<line x1="548" y1="87.60000000000001" x2="548" y2="91.2" stroke="#c4c4c4" stroke-width="0.9" />
<path d="M548 89.4 L545.2 88.5 L545.2 90.30000000000001 Z" fill="#c4c4c4" stroke="none" stroke-width="1" />
<line x1="237" y1="99.2" x2="237" y2="102.8" stroke="#c4c4c4" stroke-width="0.9" />
<path d="M237 101 L239.8 100.1 L239.8 101.9 Z" fill="#c4c4c4" stroke="none" stroke-width="1" />
<line x1="362" y1="99.2" x2="362" y2="102.8" stroke="#c4c4c4" stroke-width="0.9" />
<path d="M362 101 L359.2 100.1 L359.2 101.9 Z" fill="#c4c4c4" stroke="none" stroke-width="1" />
<path d="M362 101 L364.8 100.1 L364.8 101.9 Z" fill="#c4c4c4" stroke="none" stroke-width="1" />
<line x1="384.6" y1="99.2" x2="384.6" y2="102.8" stroke="#c4c4c4" stroke-width="0.9" />
<path d="M384.6 101 L381.8 100.1 L381.8 101.9 Z" fill="#c4c4c4" stroke="none" stroke-width="1" />
<path d="M384.6 101 L387.40000000000003 100.1 L387.40000000000003 101.9 Z" fill="#c4c4c4" stroke="none" stroke-width="1" />
<line x1="401" y1="99.2" x2="401" y2="102.8" stroke="#c4c4c4" stroke-width="0.9" />
<path d="M401 101 L398.2 100.1 L398.2 101.9 Z" fill="#c4c4c4" stroke="none" stroke-width="1" />
<path d="M401 101 L403.8 100.1 L403.8 101.9 Z" fill="#c4c4c4" stroke="none" stroke-width="1" />
<line x1="423.6" y1="99.2" x2="423.6" y2="102.8" stroke="#c4c4c4" stroke-width="0.9" />
<path d="M423.6 101 L420.8 100.1 L420.8 101.9 Z" fill="#c4c4c4" stroke="none" stroke-width="1" />
<path d="M423.6 101 L426.40000000000003 100.1 L426.40000000000003 101.9 Z" fill="#c4c4c4" stroke="none" stroke-width="1" />
<line x1="548" y1="99.2" x2="548" y2="102.8" stroke="#c4c4c4" stroke-width="0.9" />
<path d="M548 101 L545.2 100.1 L545.2 101.9 Z" fill="#c4c4c4" stroke="none" stroke-width="1" />
<text x="299.2" y="100" font-size="7.6" fill="#d8d8d8" text-anchor="middle" textLength="11.5" lengthAdjust="spacingAndGlyphs">557</text>
<text x="485.2" y="100" font-size="7.6" fill="#d8d8d8" text-anchor="middle" textLength="11.5" lengthAdjust="spacingAndGlyphs">557</text>
<text x="372.4" y="100" font-size="7" fill="#d8d8d8" text-anchor="middle" textLength="9.5" lengthAdjust="spacingAndGlyphs">100</text>
<text x="372.6" y="107.4" font-size="7" fill="#d8d8d8" text-anchor="middle" textLength="6.8" lengthAdjust="spacingAndGlyphs">70</text>
<text x="392.6" y="100" font-size="7.4" fill="#d8d8d8" text-anchor="middle" textLength="7.4" lengthAdjust="spacingAndGlyphs">73</text>
<text x="409.4" y="100" font-size="7" fill="#d8d8d8" text-anchor="middle" textLength="9.5" lengthAdjust="spacingAndGlyphs">100</text>
<text x="409.6" y="107.4" font-size="7" fill="#d8d8d8" text-anchor="middle" textLength="6.8" lengthAdjust="spacingAndGlyphs">70</text>
<text x="232.5" y="88.6" font-size="7" fill="#d8d8d8" text-anchor="middle" textLength="7" lengthAdjust="spacingAndGlyphs">25</text>
<text x="275" y="88.6" font-size="7" fill="#d8d8d8" text-anchor="middle" textLength="17" lengthAdjust="spacingAndGlyphs">3005</text>
<text x="305" y="88.6" font-size="7" fill="#d8d8d8" text-anchor="middle" textLength="7" lengthAdjust="spacingAndGlyphs">25</text>
<text x="353" y="88.6" font-size="7" fill="#d8d8d8" text-anchor="middle" textLength="16" lengthAdjust="spacingAndGlyphs">3005</text>
<text x="392" y="88.6" font-size="7" fill="#d8d8d8" text-anchor="middle" textLength="6.5" lengthAdjust="spacingAndGlyphs">32</text>
<text x="409.5" y="88.6" font-size="7" fill="#d8d8d8" text-anchor="middle" textLength="10" lengthAdjust="spacingAndGlyphs">245</text>
<text x="441" y="88.6" font-size="7" fill="#d8d8d8" text-anchor="middle" textLength="7" lengthAdjust="spacingAndGlyphs">25</text>
<text x="495" y="88.6" font-size="7" fill="#d8d8d8" text-anchor="middle" textLength="11" lengthAdjust="spacingAndGlyphs">372</text>
<text x="538" y="88.6" font-size="7" fill="#d8d8d8" text-anchor="middle" textLength="7" lengthAdjust="spacingAndGlyphs">25</text>
<line x1="236.4" y1="478.7" x2="549.7" y2="478.7" stroke="#c4c4c4" stroke-width="1" />
<line x1="236.4" y1="489.9" x2="548" y2="489.9" stroke="#c4c4c4" stroke-width="1" />
<line x1="233.9" y1="501.4" x2="551" y2="501.4" stroke="#c4c4c4" stroke-width="1" />
<line x1="233.9" y1="512.6" x2="550.9" y2="512.6" stroke="#c4c4c4" stroke-width="1" />
<line x1="236.4" y1="476.9" x2="236.4" y2="480.5" stroke="#c4c4c4" stroke-width="0.9" />
<path d="M236.4 478.7 L239.20000000000002 477.8 L239.20000000000002 479.59999999999997 Z" fill="#c4c4c4" stroke="none" stroke-width="1" />
<line x1="310.3" y1="476.9" x2="310.3" y2="480.5" stroke="#c4c4c4" stroke-width="0.9" />
<path d="M310.3 478.7 L307.5 477.8 L307.5 479.59999999999997 Z" fill="#c4c4c4" stroke="none" stroke-width="1" />
<path d="M310.3 478.7 L313.1 477.8 L313.1 479.59999999999997 Z" fill="#c4c4c4" stroke="none" stroke-width="1" />
<line x1="352.6" y1="476.9" x2="352.6" y2="480.5" stroke="#c4c4c4" stroke-width="0.9" />
<path d="M352.6 478.7 L349.8 477.8 L349.8 479.59999999999997 Z" fill="#c4c4c4" stroke="none" stroke-width="1" />
<path d="M352.6 478.7 L355.40000000000003 477.8 L355.40000000000003 479.59999999999997 Z" fill="#c4c4c4" stroke="none" stroke-width="1" />
<line x1="375.7" y1="476.9" x2="375.7" y2="480.5" stroke="#c4c4c4" stroke-width="0.9" />
<path d="M375.7 478.7 L372.9 477.8 L372.9 479.59999999999997 Z" fill="#c4c4c4" stroke="none" stroke-width="1" />
<path d="M375.7 478.7 L378.5 477.8 L378.5 479.59999999999997 Z" fill="#c4c4c4" stroke="none" stroke-width="1" />
<line x1="429.3" y1="476.9" x2="429.3" y2="480.5" stroke="#c4c4c4" stroke-width="0.9" />
<path d="M429.3 478.7 L426.5 477.8 L426.5 479.59999999999997 Z" fill="#c4c4c4" stroke="none" stroke-width="1" />
<path d="M429.3 478.7 L432.1 477.8 L432.1 479.59999999999997 Z" fill="#c4c4c4" stroke="none" stroke-width="1" />
<line x1="450.7" y1="476.9" x2="450.7" y2="480.5" stroke="#c4c4c4" stroke-width="0.9" />
<path d="M450.7 478.7 L447.9 477.8 L447.9 479.59999999999997 Z" fill="#c4c4c4" stroke="none" stroke-width="1" />
<path d="M450.7 478.7 L453.5 477.8 L453.5 479.59999999999997 Z" fill="#c4c4c4" stroke="none" stroke-width="1" />
<line x1="483.4" y1="476.9" x2="483.4" y2="480.5" stroke="#c4c4c4" stroke-width="0.9" />
<path d="M483.4 478.7 L480.59999999999997 477.8 L480.59999999999997 479.59999999999997 Z" fill="#c4c4c4" stroke="none" stroke-width="1" />
<path d="M483.4 478.7 L486.2 477.8 L486.2 479.59999999999997 Z" fill="#c4c4c4" stroke="none" stroke-width="1" />
<line x1="506.3" y1="476.9" x2="506.3" y2="480.5" stroke="#c4c4c4" stroke-width="0.9" />
<path d="M506.3 478.7 L503.5 477.8 L503.5 479.59999999999997 Z" fill="#c4c4c4" stroke="none" stroke-width="1" />
<path d="M506.3 478.7 L509.1 477.8 L509.1 479.59999999999997 Z" fill="#c4c4c4" stroke="none" stroke-width="1" />
<line x1="512" y1="476.9" x2="512" y2="480.5" stroke="#c4c4c4" stroke-width="0.9" />
<path d="M512 478.7 L509.2 477.8 L509.2 479.59999999999997 Z" fill="#c4c4c4" stroke="none" stroke-width="1" />
<path d="M512 478.7 L514.8 477.8 L514.8 479.59999999999997 Z" fill="#c4c4c4" stroke="none" stroke-width="1" />
<line x1="534.9" y1="476.9" x2="534.9" y2="480.5" stroke="#c4c4c4" stroke-width="0.9" />
<path d="M534.9 478.7 L532.1 477.8 L532.1 479.59999999999997 Z" fill="#c4c4c4" stroke="none" stroke-width="1" />
<path d="M534.9 478.7 L537.6999999999999 477.8 L537.6999999999999 479.59999999999997 Z" fill="#c4c4c4" stroke="none" stroke-width="1" />
<line x1="549.7" y1="476.9" x2="549.7" y2="480.5" stroke="#c4c4c4" stroke-width="0.9" />
<path d="M549.7 478.7 L546.9000000000001 477.8 L546.9000000000001 479.59999999999997 Z" fill="#c4c4c4" stroke="none" stroke-width="1" />
<line x1="236.4" y1="488.09999999999997" x2="236.4" y2="491.7" stroke="#c4c4c4" stroke-width="0.9" />
<path d="M236.4 489.9 L239.20000000000002 489.0 L239.20000000000002 490.79999999999995 Z" fill="#c4c4c4" stroke="none" stroke-width="1" />
<line x1="243" y1="488.09999999999997" x2="243" y2="491.7" stroke="#c4c4c4" stroke-width="0.9" />
<path d="M243 489.9 L240.2 489.0 L240.2 490.79999999999995 Z" fill="#c4c4c4" stroke="none" stroke-width="1" />
<path d="M243 489.9 L245.8 489.0 L245.8 490.79999999999995 Z" fill="#c4c4c4" stroke="none" stroke-width="1" />
<line x1="310.3" y1="488.09999999999997" x2="310.3" y2="491.7" stroke="#c4c4c4" stroke-width="0.9" />
<path d="M310.3 489.9 L307.5 489.0 L307.5 490.79999999999995 Z" fill="#c4c4c4" stroke="none" stroke-width="1" />
<path d="M310.3 489.9 L313.1 489.0 L313.1 490.79999999999995 Z" fill="#c4c4c4" stroke="none" stroke-width="1" />
<line x1="315.7" y1="488.09999999999997" x2="315.7" y2="491.7" stroke="#c4c4c4" stroke-width="0.9" />
<path d="M315.7 489.9 L312.9 489.0 L312.9 490.79999999999995 Z" fill="#c4c4c4" stroke="none" stroke-width="1" />
<path d="M315.7 489.9 L318.5 489.0 L318.5 490.79999999999995 Z" fill="#c4c4c4" stroke="none" stroke-width="1" />
<line x1="386" y1="488.09999999999997" x2="386" y2="491.7" stroke="#c4c4c4" stroke-width="0.9" />
<path d="M386 489.9 L383.2 489.0 L383.2 490.79999999999995 Z" fill="#c4c4c4" stroke="none" stroke-width="1" />
<path d="M386 489.9 L388.8 489.0 L388.8 490.79999999999995 Z" fill="#c4c4c4" stroke="none" stroke-width="1" />
<line x1="398.9" y1="488.09999999999997" x2="398.9" y2="491.7" stroke="#c4c4c4" stroke-width="0.9" />
<path d="M398.9 489.9 L396.09999999999997 489.0 L396.09999999999997 490.79999999999995 Z" fill="#c4c4c4" stroke="none" stroke-width="1" />
<path d="M398.9 489.9 L401.7 489.0 L401.7 490.79999999999995 Z" fill="#c4c4c4" stroke="none" stroke-width="1" />
<line x1="453.7" y1="488.09999999999997" x2="453.7" y2="491.7" stroke="#c4c4c4" stroke-width="0.9" />
<path d="M453.7 489.9 L450.9 489.0 L450.9 490.79999999999995 Z" fill="#c4c4c4" stroke="none" stroke-width="1" />
<path d="M453.7 489.9 L456.5 489.0 L456.5 490.79999999999995 Z" fill="#c4c4c4" stroke="none" stroke-width="1" />
<line x1="459.4" y1="488.09999999999997" x2="459.4" y2="491.7" stroke="#c4c4c4" stroke-width="0.9" />
<path d="M459.4 489.9 L456.59999999999997 489.0 L456.59999999999997 490.79999999999995 Z" fill="#c4c4c4" stroke="none" stroke-width="1" />
<path d="M459.4 489.9 L462.2 489.0 L462.2 490.79999999999995 Z" fill="#c4c4c4" stroke="none" stroke-width="1" />
<line x1="542" y1="488.09999999999997" x2="542" y2="491.7" stroke="#c4c4c4" stroke-width="0.9" />
<path d="M542 489.9 L539.2 489.0 L539.2 490.79999999999995 Z" fill="#c4c4c4" stroke="none" stroke-width="1" />
<path d="M542 489.9 L544.8 489.0 L544.8 490.79999999999995 Z" fill="#c4c4c4" stroke="none" stroke-width="1" />
<line x1="548" y1="488.09999999999997" x2="548" y2="491.7" stroke="#c4c4c4" stroke-width="0.9" />
<path d="M548 489.9 L545.2 489.0 L545.2 490.79999999999995 Z" fill="#c4c4c4" stroke="none" stroke-width="1" />
<line x1="234" y1="499.59999999999997" x2="234" y2="503.2" stroke="#c4c4c4" stroke-width="0.9" />
<path d="M234 501.4 L236.8 500.5 L236.8 502.29999999999995 Z" fill="#c4c4c4" stroke="none" stroke-width="1" />
<line x1="237" y1="499.59999999999997" x2="237" y2="503.2" stroke="#c4c4c4" stroke-width="0.9" />
<path d="M237 501.4 L234.2 500.5 L234.2 502.29999999999995 Z" fill="#c4c4c4" stroke="none" stroke-width="1" />
<path d="M237 501.4 L239.8 500.5 L239.8 502.29999999999995 Z" fill="#c4c4c4" stroke="none" stroke-width="1" />
<line x1="307.9" y1="499.59999999999997" x2="307.9" y2="503.2" stroke="#c4c4c4" stroke-width="0.9" />
<path d="M307.9 501.4 L305.09999999999997 500.5 L305.09999999999997 502.29999999999995 Z" fill="#c4c4c4" stroke="none" stroke-width="1" />
<path d="M307.9 501.4 L310.7 500.5 L310.7 502.29999999999995 Z" fill="#c4c4c4" stroke="none" stroke-width="1" />
<line x1="311" y1="499.59999999999997" x2="311" y2="503.2" stroke="#c4c4c4" stroke-width="0.9" />
<path d="M311 501.4 L308.2 500.5 L308.2 502.29999999999995 Z" fill="#c4c4c4" stroke="none" stroke-width="1" />
<path d="M311 501.4 L313.8 500.5 L313.8 502.29999999999995 Z" fill="#c4c4c4" stroke="none" stroke-width="1" />
<line x1="548" y1="499.59999999999997" x2="548" y2="503.2" stroke="#c4c4c4" stroke-width="0.9" />
<path d="M548 501.4 L545.2 500.5 L545.2 502.29999999999995 Z" fill="#c4c4c4" stroke="none" stroke-width="1" />
<path d="M548 501.4 L550.8 500.5 L550.8 502.29999999999995 Z" fill="#c4c4c4" stroke="none" stroke-width="1" />
<line x1="551" y1="499.59999999999997" x2="551" y2="503.2" stroke="#c4c4c4" stroke-width="0.9" />
<path d="M551 501.4 L548.2 500.5 L548.2 502.29999999999995 Z" fill="#c4c4c4" stroke="none" stroke-width="1" />
<line x1="234" y1="510.8" x2="234" y2="514.4" stroke="#c4c4c4" stroke-width="0.9" />
<path d="M234 512.6 L236.8 511.70000000000005 L236.8 513.5 Z" fill="#c4c4c4" stroke="none" stroke-width="1" />
<line x1="307.9" y1="510.8" x2="307.9" y2="514.4" stroke="#c4c4c4" stroke-width="0.9" />
<path d="M307.9 512.6 L305.09999999999997 511.70000000000005 L305.09999999999997 513.5 Z" fill="#c4c4c4" stroke="none" stroke-width="1" />
<path d="M307.9 512.6 L310.7 511.70000000000005 L310.7 513.5 Z" fill="#c4c4c4" stroke="none" stroke-width="1" />
<line x1="550.9" y1="510.8" x2="550.9" y2="514.4" stroke="#c4c4c4" stroke-width="0.9" />
<path d="M550.9 512.6 L548.1 511.70000000000005 L548.1 513.5 Z" fill="#c4c4c4" stroke="none" stroke-width="1" />
<text x="274.5" y="477.8" font-size="7" fill="#d8d8d8" text-anchor="middle" textLength="15" lengthAdjust="spacingAndGlyphs">3255</text>
<text x="330.5" y="477.8" font-size="7" fill="#d8d8d8" text-anchor="middle" textLength="12" lengthAdjust="spacingAndGlyphs">1915</text>
<text x="363" y="477.8" font-size="7" fill="#d8d8d8" text-anchor="middle" textLength="9" lengthAdjust="spacingAndGlyphs">100</text>
<text x="365.6" y="485.6" font-size="7" fill="#d8d8d8" text-anchor="middle" textLength="6" lengthAdjust="spacingAndGlyphs">70</text>
<text x="401.5" y="477.8" font-size="7.2" fill="#d8d8d8" text-anchor="middle" textLength="11" lengthAdjust="spacingAndGlyphs">238</text>
<text x="438.5" y="477.8" font-size="7" fill="#d8d8d8" text-anchor="middle" textLength="9" lengthAdjust="spacingAndGlyphs">100</text>
<text x="440" y="485.6" font-size="7" fill="#d8d8d8" text-anchor="middle" textLength="6" lengthAdjust="spacingAndGlyphs">70</text>
<text x="466" y="477.8" font-size="7.2" fill="#d8d8d8" text-anchor="middle" textLength="10.5" lengthAdjust="spacingAndGlyphs">145</text>
<text x="493.5" y="477.8" font-size="7" fill="#d8d8d8" text-anchor="middle" textLength="9" lengthAdjust="spacingAndGlyphs">100</text>
<text x="494.6" y="485.6" font-size="7" fill="#d8d8d8" text-anchor="middle" textLength="6" lengthAdjust="spacingAndGlyphs">70</text>
<text x="509" y="472.6" font-size="7.2" fill="#d8d8d8" text-anchor="middle" textLength="8" lengthAdjust="spacingAndGlyphs">30</text>
<text x="522.5" y="477.8" font-size="7" fill="#d8d8d8" text-anchor="middle" textLength="9" lengthAdjust="spacingAndGlyphs">100</text>
<text x="524" y="485.6" font-size="7" fill="#d8d8d8" text-anchor="middle" textLength="6" lengthAdjust="spacingAndGlyphs">70</text>
<text x="542" y="477.8" font-size="7.2" fill="#d8d8d8" text-anchor="middle" textLength="11" lengthAdjust="spacingAndGlyphs">575</text>
<text x="232.3" y="489" font-size="7" fill="#d8d8d8" text-anchor="middle" textLength="7.5" lengthAdjust="spacingAndGlyphs">25</text>
<text x="273.5" y="489" font-size="7" fill="#d8d8d8" text-anchor="middle" textLength="15" lengthAdjust="spacingAndGlyphs">3005</text>
<text x="304.5" y="489" font-size="7" fill="#d8d8d8" text-anchor="middle" textLength="7.5" lengthAdjust="spacingAndGlyphs">25</text>
<text x="350.5" y="489" font-size="7" fill="#d8d8d8" text-anchor="middle" textLength="13" lengthAdjust="spacingAndGlyphs">3165</text>
<text x="392" y="489" font-size="7" fill="#d8d8d8" text-anchor="middle" textLength="7.5" lengthAdjust="spacingAndGlyphs">53</text>
<text x="422" y="489" font-size="7.2" fill="#d8d8d8" text-anchor="middle" textLength="12" lengthAdjust="spacingAndGlyphs">245</text>
<text x="447.5" y="489" font-size="7" fill="#d8d8d8" text-anchor="middle" textLength="7.5" lengthAdjust="spacingAndGlyphs">25</text>
<text x="496" y="489.6" font-size="7.2" fill="#d8d8d8" text-anchor="middle" textLength="10.5" lengthAdjust="spacingAndGlyphs">372</text>
<text x="537.5" y="489" font-size="7" fill="#d8d8d8" text-anchor="middle" textLength="7.5" lengthAdjust="spacingAndGlyphs">25</text>
<text x="228.5" y="500.6" font-size="6.4" fill="#00d000" text-anchor="middle" textLength="5.5" lengthAdjust="spacingAndGlyphs">12</text>
<text x="268.5" y="500.6" font-size="7" fill="#d8d8d8" text-anchor="middle" textLength="13" lengthAdjust="spacingAndGlyphs">3135</text>
<text x="301.5" y="500.6" font-size="6.4" fill="#00d000" text-anchor="middle" textLength="5.5" lengthAdjust="spacingAndGlyphs">12</text>
<text x="440.5" y="500.6" font-size="7" fill="#d8d8d8" text-anchor="middle" textLength="17" lengthAdjust="spacingAndGlyphs">10615</text>
<text x="542" y="500.6" font-size="6.4" fill="#00d000" text-anchor="middle" textLength="6" lengthAdjust="spacingAndGlyphs">12</text>
<text x="271.5" y="511.8" font-size="7" fill="#d8d8d8" text-anchor="middle" textLength="15" lengthAdjust="spacingAndGlyphs">3255</text>
<text x="441" y="511.8" font-size="7" fill="#d8d8d8" text-anchor="middle" textLength="18" lengthAdjust="spacingAndGlyphs">10855</text>
<path d="M234 270.2 L217 270.2 L211 276.6 L211 445.6 L356.5 525" fill="none" stroke="#b40000" stroke-width="1.15" />
<path d="M540 438.6 L537.9 459.3 L433.8 525" fill="none" stroke="#b40000" stroke-width="1.15" />
<line x1="383.6" y1="438.6" x2="380" y2="525" stroke="#b40000" stroke-width="1.15" />
<line x1="400.6" y1="438.6" x2="400.6" y2="525" stroke="#b40000" stroke-width="1.15" />
<path d="M384.2 438.6 L380.6 464.6 L346.6 464.6" fill="none" stroke="#b8b8b8" stroke-width="1" stroke-dasharray="29 0 14 2 3 2 30"/>
<line x1="383.8" y1="438.6" x2="380.4" y2="464.6" stroke="#b8b8b8" stroke-width="1" />
<line x1="346.6" y1="464.6" x2="380.4" y2="464.6" stroke="#b8b8b8" stroke-width="1" stroke-dasharray="14 2 3 2"/>
<line x1="400.4" y1="438.6" x2="395.6" y2="464.6" stroke="#b8b8b8" stroke-width="1" />
<line x1="395.6" y1="464.6" x2="430" y2="464.6" stroke="#b8b8b8" stroke-width="1" stroke-dasharray="9 2 3 2 30"/>
<line x1="537" y1="452.4" x2="537" y2="464.6" stroke="#b8b8b8" stroke-width="1" />
<line x1="504.3" y1="464.6" x2="537" y2="464.6" stroke="#b8b8b8" stroke-width="1" stroke-dasharray="6 2 2 2 40"/>
<line x1="337.8" y1="428" x2="337.8" y2="525" stroke="#0000c8" stroke-width="1.2" />
<line x1="415.4" y1="436" x2="415.4" y2="525" stroke="#0000c8" stroke-width="1.2" />
<line x1="155" y1="406.7" x2="307" y2="406.7" stroke="#008c00" stroke-width="1.4" />
<line x1="551" y1="406.7" x2="637.9" y2="406.7" stroke="#008c00" stroke-width="1.4" />
<line x1="307" y1="406.7" x2="551" y2="406.7" stroke="#a8cca8" stroke-width="0.9" />
<line x1="310.7" y1="406.7" x2="315.7" y2="406.7" stroke="#2060a0" stroke-width="1.2" />
<line x1="387" y1="406.7" x2="398.5" y2="406.7" stroke="#2060a0" stroke-width="1.2" />
<line x1="543" y1="406.7" x2="548" y2="406.7" stroke="#2060a0" stroke-width="1.2" />
<path d="M155 406.7 L161.4 406.7 L158.2 400 Z" fill="#00a000" stroke="none" stroke-width="1" />
<path d="M630.7 406.7 L637.9 406.7 L634.3 400 Z" fill="#00a000" stroke="none" stroke-width="1" />
<text x="144.6" y="406.2" font-size="10" fill="#00a000" text-anchor="start" >C</text>
<text x="640.4" y="406.2" font-size="10" fill="#00a000" text-anchor="start" >C</text>
<line x1="343.4" y1="86" x2="343.4" y2="129" stroke="#008c00" stroke-width="1.1" />
<line x1="463.6" y1="86" x2="463.6" y2="129" stroke="#008c00" stroke-width="1.1" />
<line x1="343.4" y1="129" x2="343.4" y2="137.6" stroke="#204080" stroke-width="0.8" />
<line x1="463.6" y1="129" x2="463.6" y2="137.6" stroke="#204080" stroke-width="0.8" />
<path d="M339.6 86 L343.4 86 L343.4 89.6 Z" fill="#00b000" stroke="none" stroke-width="1" />
<path d="M463.6 86 L468.4 86 L463.6 89.6 Z" fill="#00b000" stroke="none" stroke-width="1" />
<path d="M343.4 137.6 L343.4 254.4 L368 254.4 L368 430" fill="none" stroke="#9dbf9d" stroke-width="0.8" />
<path d="M463.6 137.6 L463.6 212.6 L414.3 212.6 L414.3 430" fill="none" stroke="#9dbf9d" stroke-width="0.8" />
<line x1="368" y1="438.6" x2="368" y2="503.6" stroke="#008c00" stroke-width="1.2" />
<line x1="414.3" y1="438.6" x2="414.3" y2="501" stroke="#008c00" stroke-width="1.2" />
<path d="M368 493.8 L368 500.2 L361 497 Z" fill="#00a000" stroke="none" stroke-width="1" />
<path d="M414.6 493 L414.6 501 L421.4 497 Z" fill="#00a000" stroke="none" stroke-width="1" />
<text x="364" y="511.4" font-size="8" fill="#008800" text-anchor="start" transform="rotate(-90 364 511.4)" >A</text>
<text x="418.6" y="509.6" font-size="6.5" fill="#00a000" text-anchor="start" transform="rotate(-90 418.6 509.6)" >B</text>
<line x1="255.4" y1="137.6" x2="255.4" y2="393" stroke="#8a8aff" stroke-width="0.7" />
<line x1="324" y1="137.6" x2="324" y2="430" stroke="#8a8aff" stroke-width="0.7" />
<line x1="385.4" y1="137.6" x2="385.4" y2="430" stroke="#8a8aff" stroke-width="0.7" />
<line x1="403.6" y1="249" x2="403.6" y2="430" stroke="#8a8aff" stroke-width="0.7" />
<line x1="370" y1="307" x2="370" y2="430" stroke="#8a8aff" stroke-width="0.7" />
<line x1="528" y1="137.6" x2="528" y2="430" stroke="#8a8aff" stroke-width="0.7" />
<line x1="315.7" y1="340" x2="384.3" y2="340" stroke="#8a8aff" stroke-width="0.7" />
<text x="254.6" y="225.5" font-size="6" fill="#5a5aff" text-anchor="middle" textLength="8.5" lengthAdjust="spacingAndGlyphs" transform="rotate(-90 254.6 225.5)">787</text>
<text x="323.6" y="211.5" font-size="6" fill="#5a5aff" text-anchor="middle" textLength="8.5" lengthAdjust="spacingAndGlyphs" transform="rotate(-90 323.6 211.5)">457</text>
<text x="527.4" y="215" font-size="6" fill="#5a5aff" text-anchor="middle" textLength="9" lengthAdjust="spacingAndGlyphs" transform="rotate(-90 527.4 215)">685</text>
<text x="527.4" y="366.5" font-size="6" fill="#5a5aff" text-anchor="middle" textLength="7.5" lengthAdjust="spacingAndGlyphs" transform="rotate(-90 527.4 366.5)">455</text>
<text x="384.2" y="195" font-size="6" fill="#5a5aff" text-anchor="middle" textLength="8.5" lengthAdjust="spacingAndGlyphs" transform="rotate(-90 384.2 195)">507</text>
<text x="254.6" y="355.5" font-size="6" fill="#5a5aff" text-anchor="middle" textLength="13" lengthAdjust="spacingAndGlyphs" transform="rotate(-90 254.6 355.5)">3435</text>
<text x="322.6" y="292.4" font-size="6" fill="#5a5aff" text-anchor="middle" textLength="4" lengthAdjust="spacingAndGlyphs" transform="rotate(-90 322.6 292.4)">10</text>
<text x="322.6" y="322" font-size="6" fill="#5a5aff" text-anchor="middle" textLength="7" lengthAdjust="spacingAndGlyphs" transform="rotate(-90 322.6 322)">304</text>
<text x="322.6" y="358" font-size="6" fill="#5a5aff" text-anchor="middle" textLength="4" lengthAdjust="spacingAndGlyphs" transform="rotate(-90 322.6 358)">10</text>
<text x="322.6" y="371" font-size="6" fill="#5a5aff" text-anchor="middle" textLength="6.5" lengthAdjust="spacingAndGlyphs" transform="rotate(-90 322.6 371)">100</text>
<text x="322.6" y="386" font-size="6" fill="#5a5aff" text-anchor="middle" textLength="4" lengthAdjust="spacingAndGlyphs" transform="rotate(-90 322.6 386)">10</text>
<text x="322.6" y="410.5" font-size="6" fill="#5a5aff" text-anchor="middle" textLength="8" lengthAdjust="spacingAndGlyphs" transform="rotate(-90 322.6 410.5)">210</text>
<text x="368.6" y="312" font-size="6" fill="#5a5aff" text-anchor="middle" textLength="4" lengthAdjust="spacingAndGlyphs" transform="rotate(-90 368.6 312)">10</text>
<text x="368.6" y="346.5" font-size="6" fill="#5a5aff" text-anchor="middle" textLength="5" lengthAdjust="spacingAndGlyphs" transform="rotate(-90 368.6 346.5)">32</text>
<text x="368.6" y="386.5" font-size="6" fill="#5a5aff" text-anchor="middle" textLength="4" lengthAdjust="spacingAndGlyphs" transform="rotate(-90 368.6 386.5)">10</text>
<text x="383.6" y="346" font-size="6" fill="#5a5aff" text-anchor="middle" textLength="7.5" lengthAdjust="spacingAndGlyphs" transform="rotate(-90 383.6 346)">749</text>
<text x="383.6" y="246" font-size="6" fill="#5a5aff" text-anchor="middle" textLength="5" lengthAdjust="spacingAndGlyphs" transform="rotate(-90 383.6 246)">50</text>
<text x="402.6" y="254.6" font-size="6" fill="#5a5aff" text-anchor="middle" textLength="4" lengthAdjust="spacingAndGlyphs" transform="rotate(-90 402.6 254.6)">10</text>
<text x="402.6" y="267.5" font-size="6" fill="#5a5aff" text-anchor="middle" textLength="7" lengthAdjust="spacingAndGlyphs" transform="rotate(-90 402.6 267.5)">322</text>
<text x="402.6" y="321" font-size="6" fill="#5a5aff" text-anchor="middle" textLength="8" lengthAdjust="spacingAndGlyphs" transform="rotate(-90 402.6 321)">382</text>
<text x="402.6" y="369" font-size="6" fill="#5a5aff" text-anchor="middle" textLength="4" lengthAdjust="spacingAndGlyphs" transform="rotate(-90 402.6 369)">10</text>
<text x="402.6" y="401" font-size="6" fill="#5a5aff" text-anchor="middle" textLength="8" lengthAdjust="spacingAndGlyphs" transform="rotate(-90 402.6 401)">220</text>
<text x="527.4" y="297.4" font-size="6" fill="#5a5aff" text-anchor="middle" textLength="4" lengthAdjust="spacingAndGlyphs" transform="rotate(-90 527.4 297.4)">10</text>
<text x="329.5" y="339.4" font-size="6" fill="#5a5aff" text-anchor="middle" textLength="8" lengthAdjust="spacingAndGlyphs">130</text>
<text x="350.5" y="339.4" font-size="6" fill="#5a5aff" text-anchor="middle" textLength="5.5" lengthAdjust="spacingAndGlyphs">65</text>
<text x="368" y="339.4" font-size="6" fill="#5a5aff" text-anchor="middle" textLength="5" lengthAdjust="spacingAndGlyphs">25</text>
<text x="378.5" y="339.4" font-size="6" fill="#5a5aff" text-anchor="middle" textLength="7" lengthAdjust="spacingAndGlyphs">100</text>
<rect x="243" y="313.5" width="67" height="2.4" fill="#ff0000" />
<rect x="316.4" y="284.25" width="2.400000000000034" height="2.3" fill="#ff0000" />
<path d="M340.7 284.2 L363.8 284.2 L361 286.6 L340.7 286.6 Z" fill="#ff0000" stroke="none" stroke-width="1" />
<rect x="365" y="306.5" width="21.899999999999977" height="2.2" fill="#ff0000" />
<path d="M345 354.9 L360 354.9 L363.8 357.2 L345 357.2 Z" fill="#ff0000" stroke="none" stroke-width="1" />
<rect x="316.5" y="379.55" width="2.5" height="2.3" fill="#ff0000" />
<rect x="341.4" y="379.5" width="45.60000000000002" height="2.4" fill="#ff0000" />
<rect x="398.5" y="247.8" width="30.80000000000001" height="2.2" fill="#ff0000" />
<rect x="450.7" y="247.8" width="2.5" height="2.2" fill="#ff0000" />
<rect x="459.7" y="290.90000000000003" width="83.30000000000001" height="2.4" fill="#ff0000" />
<rect x="398.5" y="362.79999999999995" width="10.100000000000023" height="2.2" fill="#ff0000" />
<rect x="409.6" y="362.79999999999995" width="3.599999999999966" height="2.2" fill="#ff0000" />
<rect x="414.2" y="362.79999999999995" width="7.199999999999989" height="2.2" fill="#ff0000" />
<rect x="427" y="362.79999999999995" width="2.3000000000000114" height="2.2" fill="#ff0000" />
<rect x="450.7" y="362.79999999999995" width="2.5" height="2.2" fill="#ff0000" />
<line x1="459.7" y1="275.4" x2="543" y2="275.4" stroke="#ff6a6a" stroke-width="0.7" />
<line x1="459.7" y1="306.6" x2="543" y2="306.6" stroke="#ff6a6a" stroke-width="0.7" />
<line x1="459.7" y1="275.4" x2="543" y2="292.1" stroke="#ff6a6a" stroke-width="0.7" />
<line x1="459.7" y1="292.1" x2="543" y2="275.4" stroke="#ff6a6a" stroke-width="0.7" />
<line x1="459.7" y1="292.1" x2="543" y2="306.6" stroke="#ff6a6a" stroke-width="0.7" />
<line x1="459.7" y1="306.6" x2="543" y2="292.1" stroke="#ff6a6a" stroke-width="0.7" />
<circle cx="255.4" cy="314.7" r="1" fill="#3030ff"/>
<circle cx="370" cy="307.6" r="1" fill="#3030ff"/>
<circle cx="403.6" cy="248.9" r="1" fill="#3030ff"/>
<circle cx="403.6" cy="363.9" r="1" fill="#3030ff"/>
<circle cx="370" cy="380.7" r="1" fill="#3030ff"/>
<circle cx="528" cy="292.1" r="1" fill="#3030ff"/>
<rect x="421.4" y="277" width="5.6" height="100.1" fill="#0000ff" />
<line x1="319" y1="263" x2="319" y2="285" stroke="#8fa39a" stroke-width="0.8" />
<path d="M319 263 A22 22 0 0 1 341 285" fill="none" stroke="#8fa39a" stroke-width="0.8"/>
<line x1="319" y1="284.2" x2="340.6" y2="284.2" stroke="#8fa39a" stroke-width="0.8" />
<line x1="319" y1="286.8" x2="340.6" y2="286.8" stroke="#8fa39a" stroke-width="0.8" />
<line x1="329.7" y1="270" x2="329.7" y2="287" stroke="#8fa39a" stroke-width="0.8" />
<text x="328.4" y="281" font-size="5.6" fill="#6e6e6e" text-anchor="start" textLength="4.5" lengthAdjust="spacingAndGlyphs" transform="rotate(-90 328.4 281)" >90</text>
<text x="334.2" y="282" font-size="5.6" fill="#6e6e6e" text-anchor="start" textLength="6.6" lengthAdjust="spacingAndGlyphs" transform="rotate(-90 334.2 282)" >200</text>
<line x1="310" y1="289" x2="310" y2="311.4" stroke="#8fa39a" stroke-width="0.8" />
<line x1="316" y1="290" x2="316" y2="311.4" stroke="#8fa39a" stroke-width="0.8" />
<path d="M310 289 A22 22 0 0 0 288 311" fill="none" stroke="#8fa39a" stroke-width="0.8"/>
<line x1="296" y1="300.3" x2="316" y2="300.3" stroke="#8fa39a" stroke-width="0.8" />
<text x="300.2" y="299" font-size="5.6" fill="#6e6e6e" text-anchor="start" textLength="4.8" lengthAdjust="spacingAndGlyphs" >90</text>
<text x="297.4" y="306.4" font-size="5.6" fill="#6e6e6e" text-anchor="start" textLength="7" lengthAdjust="spacingAndGlyphs" >200</text>
<line x1="289" y1="332" x2="310" y2="332" stroke="#8fa39a" stroke-width="0.8" />
<line x1="310" y1="332" x2="310" y2="354.3" stroke="#8fa39a" stroke-width="0.8" />
<line x1="316" y1="332" x2="316" y2="354.3" stroke="#8fa39a" stroke-width="0.8" />
<path d="M288 332 A22 22 0 0 0 310 354" fill="none" stroke="#8fa39a" stroke-width="0.8"/>
<line x1="296" y1="342.6" x2="316" y2="342.6" stroke="#8fa39a" stroke-width="0.8" />
<text x="300.2" y="341.2" font-size="5.6" fill="#6e6e6e" text-anchor="start" textLength="4.8" lengthAdjust="spacingAndGlyphs" >90</text>
<text x="297.4" y="348.8" font-size="5.6" fill="#6e6e6e" text-anchor="start" textLength="7" lengthAdjust="spacingAndGlyphs" >200</text>
<line x1="319.3" y1="381" x2="319.3" y2="403" stroke="#8fa39a" stroke-width="0.8" />
<line x1="319.3" y1="381.8" x2="341" y2="381.8" stroke="#8fa39a" stroke-width="0.8" />
<path d="M341.3 381 A22 22 0 0 1 319.3 403" fill="none" stroke="#8fa39a" stroke-width="0.8"/>
<line x1="330" y1="381" x2="330" y2="395" stroke="#8fa39a" stroke-width="0.8" />
<text x="328.6" y="389" font-size="5.6" fill="#6e6e6e" text-anchor="start" textLength="4.5" lengthAdjust="spacingAndGlyphs" transform="rotate(60 328.6 389)" >90</text>
<text x="333.6" y="392" font-size="5.6" fill="#6e6e6e" text-anchor="start" textLength="6.6" lengthAdjust="spacingAndGlyphs" transform="rotate(70 333.6 392)" >200</text>
<line x1="450.7" y1="226" x2="450.7" y2="249" stroke="#8fa39a" stroke-width="0.8" />
<path d="M429.3 249 A22 22 0 0 1 450.7 227" fill="none" stroke="#8fa39a" stroke-width="0.8"/>
<line x1="429.3" y1="247.8" x2="450.7" y2="247.8" stroke="#8fa39a" stroke-width="0.8" />
<line x1="429.3" y1="250" x2="450.7" y2="250" stroke="#8fa39a" stroke-width="0.8" />
<line x1="439.7" y1="232" x2="439.7" y2="251" stroke="#8fa39a" stroke-width="0.8" />
<text x="438" y="245" font-size="5.6" fill="#6e6e6e" text-anchor="start" textLength="4.5" lengthAdjust="spacingAndGlyphs" transform="rotate(-90 438 245)" >90</text>
<text x="444.6" y="245" font-size="5.6" fill="#6e6e6e" text-anchor="start" textLength="6.6" lengthAdjust="spacingAndGlyphs" transform="rotate(-90 444.6 245)" >200</text>
<line x1="459.6" y1="251.4" x2="459.6" y2="274" stroke="#8fa39a" stroke-width="0.8" />
<line x1="453.6" y1="252" x2="453.6" y2="274" stroke="#8fa39a" stroke-width="0.8" />
<path d="M459.6 252 A22 22 0 0 1 481.6 274" fill="none" stroke="#8fa39a" stroke-width="0.8"/>
<line x1="453.6" y1="262.6" x2="474" y2="262.6" stroke="#8fa39a" stroke-width="0.8" />
<text x="461.4" y="261" font-size="5.6" fill="#6e6e6e" text-anchor="start" textLength="4.8" lengthAdjust="spacingAndGlyphs" >90</text>
<text x="461.4" y="268.6" font-size="5.6" fill="#6e6e6e" text-anchor="start" textLength="7" lengthAdjust="spacingAndGlyphs" >200</text>
<line x1="459.7" y1="308.6" x2="459.7" y2="331" stroke="#8fa39a" stroke-width="0.8" />
<line x1="453.6" y1="308" x2="453.6" y2="331" stroke="#8fa39a" stroke-width="0.8" />
<line x1="459.7" y1="308.6" x2="481.7" y2="308.6" stroke="#8fa39a" stroke-width="0.8" />
<path d="M481.7 308.6 A22 22 0 0 1 459.7 330.6" fill="none" stroke="#8fa39a" stroke-width="0.8"/>
<line x1="453.6" y1="320" x2="474" y2="320" stroke="#8fa39a" stroke-width="0.8" />
<text x="461.8" y="318.4" font-size="5.6" fill="#6e6e6e" text-anchor="start" textLength="4.8" lengthAdjust="spacingAndGlyphs" >90</text>
<text x="461.8" y="326" font-size="5.6" fill="#6e6e6e" text-anchor="start" textLength="7" lengthAdjust="spacingAndGlyphs" >200</text>
<line x1="450.7" y1="364" x2="450.7" y2="387" stroke="#8fa39a" stroke-width="0.8" />
<path d="M429.3 364 A22 22 0 0 0 450.7 386" fill="none" stroke="#8fa39a" stroke-width="0.8"/>
<line x1="429.3" y1="362.8" x2="450.7" y2="362.8" stroke="#8fa39a" stroke-width="0.8" />
<line x1="429.3" y1="365.2" x2="450.7" y2="365.2" stroke="#8fa39a" stroke-width="0.8" />
<line x1="440" y1="364" x2="440" y2="378" stroke="#8fa39a" stroke-width="0.8" />
<text x="434.6" y="371.6" font-size="5.6" fill="#6e6e6e" text-anchor="start" textLength="4.5" lengthAdjust="spacingAndGlyphs" transform="rotate(20 434.6 371.6)" >90</text>
<text x="440.6" y="376" font-size="5.6" fill="#6e6e6e" text-anchor="start" textLength="6.6" lengthAdjust="spacingAndGlyphs" transform="rotate(75 440.6 376)" >200</text>
<line x1="310.4" y1="189" x2="310.4" y2="233" stroke="#8fa39a" stroke-width="0.8" />
<line x1="316" y1="189" x2="316" y2="233" stroke="#8fa39a" stroke-width="0.8" />
<line x1="296" y1="211" x2="316" y2="211" stroke="#8fa39a" stroke-width="0.8" />
<text x="297.2" y="209.4" font-size="5.6" fill="#6e6e6e" text-anchor="start" textLength="7" lengthAdjust="spacingAndGlyphs" >200</text>
<text x="297.2" y="216.8" font-size="5.6" fill="#6e6e6e" text-anchor="start" textLength="7" lengthAdjust="spacingAndGlyphs" >220</text>
<text x="282" y="268" font-size="5.6" fill="#555" text-anchor="start" textLength="24" lengthAdjust="spacingAndGlyphs" >RDS -100</text>
<text x="282" y="272.8" font-size="5" fill="#555" text-anchor="start" textLength="28" lengthAdjust="spacingAndGlyphs" >Kanal DN 150</text>
<line x1="330.0" y1="304.6" x2="341.20000000000005" y2="304.6" stroke="#a6ee7c" stroke-width="0.6" />
<line x1="335.6" y1="299.0" x2="335.6" y2="310.20000000000005" stroke="#a6ee7c" stroke-width="0.6" />
<circle cx="335.6" cy="304.6" r="2.7" fill="none" stroke="#90ea5a" stroke-width="0.6"/>
<path d="M335.6 304.6 L335.6 301.90000000000003 A2.7 2.7 0 0 1 338.3 304.6 Z M335.6 304.6 L335.6 307.3 A2.7 2.7 0 0 1 332.90000000000003 304.6 Z" fill="#5fe80c"/>
<text x="341" y="299.2" font-size="6.8" fill="#b2f288" text-anchor="start" textLength="17" lengthAdjust="spacingAndGlyphs" >-2,95</text>
<line x1="418.4" y1="266" x2="429.6" y2="266" stroke="#a6ee7c" stroke-width="0.6" />
<line x1="424" y1="260.4" x2="424" y2="271.6" stroke="#a6ee7c" stroke-width="0.6" />
<circle cx="424" cy="266" r="2.7" fill="none" stroke="#90ea5a" stroke-width="0.6"/>
<path d="M424 266 L424 263.3 A2.7 2.7 0 0 1 426.7 266 Z M424 266 L424 268.7 A2.7 2.7 0 0 1 421.3 266 Z" fill="#5fe80c"/>
<text x="430" y="260.4" font-size="6.8" fill="#b2f288" text-anchor="start" textLength="17" lengthAdjust="spacingAndGlyphs" >-2,45</text>
<text x="411.6" y="300" font-size="7" fill="#74bf74" text-anchor="start" textLength="20" lengthAdjust="spacingAndGlyphs" transform="rotate(-90 411.6 300)" >17 STG</text>
<text x="418" y="299.4" font-size="7" fill="#86c686" text-anchor="start" textLength="37" lengthAdjust="spacingAndGlyphs" transform="rotate(-90 418 299.4)" >18,1 / 28</text>
<text x="381.3" y="366.2" font-size="6.6" fill="#74bf74" text-anchor="start" textLength="18.6" lengthAdjust="spacingAndGlyphs" transform="rotate(180 381.3 366.2)" >16 STG</text>
<text x="381.3" y="371.8" font-size="7" fill="#86c686" text-anchor="start" textLength="39.5" lengthAdjust="spacingAndGlyphs" transform="rotate(180 381.3 371.8)" >18,5 / 28</text>
<line x1="383.6" y1="283" x2="383.6" y2="355" stroke="#40b040" stroke-width="1" stroke-dasharray="1.2 5"/>
<line x1="416.8" y1="283" x2="416.8" y2="383" stroke="#40b040" stroke-width="1" stroke-dasharray="1.2 5"/>
<text x="361.3" y="142.4" font-size="5" fill="#8a7c7c" text-anchor="start" textLength="14.8" lengthAdjust="spacingAndGlyphs" >FPH 160</text>
<text x="400.2" y="142.4" font-size="5" fill="#8a7c7c" text-anchor="start" textLength="14.8" lengthAdjust="spacingAndGlyphs" >FPH 160</text>
<text x="249.4" y="198.2" font-size="5" fill="#8a7c7c" text-anchor="start" textLength="14.4" lengthAdjust="spacingAndGlyphs" transform="rotate(-90 249.4 198.2)" >FPH 160</text>
<text x="249.4" y="298.2" font-size="5" fill="#8a7c7c" text-anchor="start" textLength="14.4" lengthAdjust="spacingAndGlyphs" transform="rotate(-90 249.4 298.2)" >FPH 160</text>
<text x="249.4" y="337.7" font-size="5" fill="#8a7c7c" text-anchor="start" textLength="14.4" lengthAdjust="spacingAndGlyphs" transform="rotate(-90 249.4 337.7)" >FPH 160</text>
<path d="M353.4 433 L372.0 423.6 L375.7 430" fill="none" stroke="#9aa09a" stroke-width="0.6" />
<line x1="352.9" y1="432.6" x2="375.7" y2="432.6" stroke="#9aa09a" stroke-width="0.5" />
<path d="M430 423.4 L450.6 433" fill="none" stroke="#9aa09a" stroke-width="0.6" />
<line x1="429" y1="432.6" x2="451.1" y2="432.6" stroke="#9aa09a" stroke-width="0.5" />
<path d="M484.1 433 L501.9 423.4 L505.4 430" fill="none" stroke="#9aa09a" stroke-width="0.6" />
<line x1="483.6" y1="432.6" x2="506.4" y2="432.6" stroke="#9aa09a" stroke-width="0.5" />
<path d="M513.6 430 L516.6 423.4 L534.9 433" fill="none" stroke="#9aa09a" stroke-width="0.6" />
<line x1="512.6" y1="432.6" x2="535.4" y2="432.6" stroke="#9aa09a" stroke-width="0.5" />
<text x="352.6" y="427.2" font-size="5.2" fill="#7a7a7a" text-anchor="start" textLength="14" lengthAdjust="spacingAndGlyphs" >FPH 160</text>
<text x="428.2" y="427.2" font-size="5.2" fill="#7a7a7a" text-anchor="start" textLength="14" lengthAdjust="spacingAndGlyphs" >FPH 160</text>
<text x="483.2" y="427.2" font-size="5.2" fill="#7a7a7a" text-anchor="start" textLength="14" lengthAdjust="spacingAndGlyphs" >FPH 160</text>
<text x="512.4" y="427.2" font-size="5.2" fill="#7a7a7a" text-anchor="start" textLength="14" lengthAdjust="spacingAndGlyphs" >FPH 160</text>
<path d="M547.6 154.6 L536 171 L546.6 176.6 L536.4 182 L547 200 L536 205 L547.6 221" fill="none" stroke="#a8bcb0" stroke-width="0.6" />
<line x1="543.6" y1="154" x2="543.6" y2="221.4" stroke="#a8bcb0" stroke-width="0.6" />
<line x1="546.4" y1="154" x2="546.4" y2="221.4" stroke="#a8bcb0" stroke-width="0.6" />
<line x1="549.4" y1="187.6" x2="566" y2="187.6" stroke="#c8c8c8" stroke-width="0.6" />
<text x="540.6" y="200" font-size="5.2" fill="#7a7a7a" text-anchor="start" textLength="16" lengthAdjust="spacingAndGlyphs" transform="rotate(-90 540.6 200)" >FPH 160</text>
<text x="553.2" y="186" font-size="5.4" fill="#b06a6a" text-anchor="start" textLength="6.6" lengthAdjust="spacingAndGlyphs" >300</text>
<text x="553.6" y="192.6" font-size="5.4" fill="#b06a6a" text-anchor="start" textLength="4.4" lengthAdjust="spacingAndGlyphs" >70</text>
<path d="M383.0 429 L384.6 425 L386.20000000000005 429 Z" fill="none" stroke="#8a8a8a" stroke-width="0.6" />
<path d="M399.4 429 L401 425 L402.6 429 Z" fill="none" stroke="#8a8a8a" stroke-width="0.6" />
<path d="M543.0 429 L544.6 425 L546.2 429 Z" fill="none" stroke="#8a8a8a" stroke-width="0.6" />
<text x="247" y="272" font-size="4.6" fill="#777" text-anchor="start" transform="rotate(-90 247 272)" >C</text>
<path d="M58.2 149.6 A3.62 3.62 0 0 1 64.90 149.60 A3.62 3.62 0 0 1 71.60 149.60 A3.62 3.62 0 0 1 78.30 149.60 A3.62 3.62 0 0 1 85.00 149.60 A3.62 3.62 0 0 1 91.70 149.60 A3.62 3.62 0 0 1 98.40 149.60 A3.62 3.62 0 0 1 105.10 149.60 A3.62 3.62 0 0 1 111.80 149.60 A3.62 3.62 0 0 1 118.50 149.60 A3.62 3.62 0 0 1 125.20 149.60 A3.94 3.94 0 0 1 125.20 156.90 A3.94 3.94 0 0 1 125.20 164.20 A3.62 3.62 0 0 1 118.50 164.20 A3.62 3.62 0 0 1 111.80 164.20 A3.62 3.62 0 0 1 105.10 164.20 A3.62 3.62 0 0 1 98.40 164.20 A3.62 3.62 0 0 1 91.70 164.20 A3.62 3.62 0 0 1 85.00 164.20 A3.62 3.62 0 0 1 78.30 164.20 A3.62 3.62 0 0 1 71.60 164.20 A3.62 3.62 0 0 1 64.90 164.20 A3.62 3.62 0 0 1 58.20 164.20 A3.94 3.94 0 0 1 58.20 156.90 A3.94 3.94 0 0 1 58.20 149.60 Z" fill="none" stroke="#00ff00" stroke-width="1.4" stroke-linejoin="round"/>
<line x1="71.6" y1="167" x2="68.6" y2="202.4" stroke="#00e800" stroke-width="1.1" />
<rect x="68.8" y="203.2" width="50.6" height="29" fill="none" stroke="#00ff00" stroke-width="1.6"/>
<rect x="70.8" y="205.2" width="46.6" height="25" fill="none" stroke="#006800" stroke-width="0.8"/>
<line x1="76.6" y1="209" x2="76.6" y2="225.6" stroke="#00e000" stroke-width="1" />
<line x1="82" y1="282" x2="85.4" y2="248" stroke="#f0282a" stroke-width="2" />
<path d="M86 239.4 L81.4 248.4 L89.8 248.2 Z" fill="#f0282a" stroke="none" stroke-width="1" />
<text x="34.1" y="299.5" font-size="11.1" fill="#f42622" stroke="#f42622" stroke-width="0.32">Enter texts in the box</text>
<text x="34.1" y="312.5" font-size="11.1" fill="#f42622" stroke="#f42622" stroke-width="0.32">before confirming where</text>
<text x="34.1" y="325.5" font-size="11.1" fill="#f42622" stroke="#f42622" stroke-width="0.32">to put it</text>
</svg>
</div>
<div style="position:absolute;left:0;top:0;width:700px;height:525px;border-radius:5.5px 5.5px 6px 6px;box-shadow:inset 0 0 0 0.5px rgba(120,120,120,0.22);pointer-events:none;z-index:5;"></div>
</div>
</body>
</html>
